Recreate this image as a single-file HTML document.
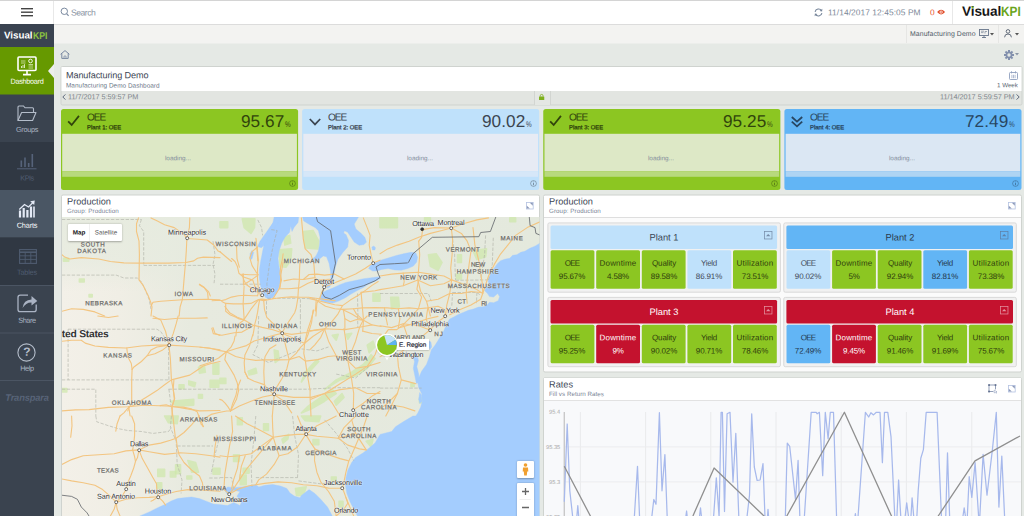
<!DOCTYPE html><html><head><meta charset="utf-8"><title>Visual KPI</title><style>
html,body{margin:0;padding:0;width:1024px;height:516px;overflow:hidden}
body{width:1024px;height:516px;overflow:hidden;position:relative;background:#e5e9e5;font-family:"Liberation Sans",sans-serif;}
div{box-sizing:border-box}
svg{position:absolute;overflow:visible}
</style></head><body><div style="position:absolute;left:0;top:0;width:1024px;height:516px;overflow:hidden">
<div style="position:absolute;left:0.00px;top:0.00px;width:1024.00px;height:24.00px;background:#fff;border-top:1px solid #d4d4d4;"></div>
<svg style="left:-1px;top:23px" width="1026" height="3"><rect x="1.00" y="1.00" width="1024.00" height="1.00" rx="0.00" fill="#dcdcdc"/></svg>
<svg style="left:53px;top:24px" width="972" height="21"><rect x="1.00" y="1.00" width="970.00" height="18.50" rx="0.00" fill="#f3f3f1"/></svg>
<svg style="left:52px;top:0px" width="3" height="25"><rect x="1.00" y="1.00" width="1.00" height="23.00" rx="0.00" fill="#e8e8e8"/></svg>
<svg style="left:20px;top:7px" width="14" height="4"><rect x="1.00" y="1.00" width="12.00" height="1.40" rx="0.00" fill="#444"/></svg>
<svg style="left:20px;top:10px" width="14" height="4"><rect x="1.00" y="1.50" width="12.00" height="1.40" rx="0.00" fill="#444"/></svg>
<svg style="left:20px;top:14px" width="14" height="4"><rect x="1.00" y="1.00" width="12.00" height="1.40" rx="0.00" fill="#444"/></svg>
<svg style="left:60px;top:7px" width="10" height="10" viewBox="0 0 10 10"><circle cx="4.3" cy="4.3" r="3.2" fill="none" stroke="#7b8aa0" stroke-width="1"/><path d="M6.6 6.6 L8.6 8.8" stroke="#7b8aa0" stroke-width="1.1"/></svg>
<div style="position:absolute;top:2px;height:20px;line-height:20px;font-size:8.6px;color:#8a94a3;white-space:nowrap;transform:translateY(0.60px) rotate(0.03deg);transform-origin:left center;left:71.00px;letter-spacing:-0.490px;">Search</div>
<svg style="left:814px;top:7.5px" width="9" height="9" viewBox="0 0 10 10"><path d="M1.2 4.2 A3.9 3.9 0 0 1 8.4 3" fill="none" stroke="#76859a" stroke-width="1.2"/><path d="M8.8 5.8 A3.9 3.9 0 0 1 1.6 7" fill="none" stroke="#76859a" stroke-width="1.2"/><path d="M9.3 0.8 L9 3.8 L6.2 3.2 Z M0.7 9.2 L1 6.2 L3.8 6.8 Z" fill="#76859a"/></svg>
<div style="position:absolute;top:2px;height:20px;line-height:20px;font-size:8.4px;color:#7b8797;white-space:nowrap;transform:translateY(0.30px) rotate(0.03deg);transform-origin:left center;left:828.00px;letter-spacing:0.067px;">11/14/2017 12:45:05 PM</div>
<div style="position:absolute;top:2px;height:20px;line-height:20px;font-size:8.4px;color:#e8532b;white-space:nowrap;transform:translateY(0.30px) rotate(0.03deg);transform-origin:left center;left:930.00px;">0</div>
<svg style="left:936.8px;top:9px" width="8.2" height="6.2" viewBox="0 0 9 7"><path d="M0 3.5 Q4.5 -1.8 9 3.5 Q4.5 8.8 0 3.5Z" fill="#e04a26"/><circle cx="4.5" cy="3.5" r="1.7" fill="#fff"/><circle cx="4.5" cy="3.5" r="0.9" fill="#e04a26"/></svg>
<svg style="left:951px;top:0px" width="3" height="25"><rect x="1.00" y="1.00" width="1.00" height="23.00" rx="0.00" fill="#e8e8e8"/></svg>
<div style="position:absolute;top:1px;height:20px;line-height:20px;font-size:13.6px;color:#161616;white-space:nowrap;transform:translateY(0.70px) rotate(0.03deg);transform-origin:left center;left:961.70px;font-weight:bold;letter-spacing:-0.104px;">Visual</div>
<div style="position:absolute;top:1px;height:20px;line-height:20px;font-size:13.6px;color:#6aa51c;white-space:nowrap;transform:translateY(0.70px) rotate(0.03deg) scaleX(0.870);transform-origin:left center;left:1001.20px;font-weight:bold;">KPI</div>
<svg style="left:971px;top:6px" width="4" height="3"><rect x="0.65" y="0.45" width="1.95" height="1.8" fill="#7ab51d"/></svg>
<svg style="left:905px;top:24px" width="3" height="20"><rect x="1.00" y="1.00" width="1.00" height="18.00" rx="0.00" fill="#e6e6e4"/></svg>
<svg style="left:997px;top:24px" width="3" height="20"><rect x="1.00" y="1.00" width="1.00" height="18.00" rx="0.00" fill="#e6e6e4"/></svg>
<div style="position:absolute;top:23px;height:20px;line-height:20px;font-size:6.9px;color:#4d5866;white-space:nowrap;transform:translateY(0.90px) rotate(0.03deg);transform-origin:left center;left:909.50px;letter-spacing:0.091px;">Manufacturing Demo</div>
<svg style="left:979px;top:29px" width="10" height="9" viewBox="0 0 10 9"><rect x="0.5" y="0.5" width="9" height="6" fill="none" stroke="#67758a" stroke-width="0.9"/><path d="M3 8.5H7M5 6.5V8.5" stroke="#67758a" stroke-width="0.9"/><path d="M2 2.2H5M2 3.6H4.5M6 4.5V2.5H8" stroke="#67758a" stroke-width="0.6" fill="none"/></svg>
<svg style="left:990px;top:33px" width="4" height="3" viewBox="0 0 4 3"><path d="M0 0H4L2 2.6Z" fill="#555"/></svg>
<svg style="left:1004px;top:29px" width="8" height="9" viewBox="0 0 8 9"><circle cx="4" cy="2.4" r="1.8" fill="none" stroke="#555f6e" stroke-width="0.9"/><path d="M0.6 8.3 Q0.6 5 4 5 Q7.4 5 7.4 8.3" fill="none" stroke="#555f6e" stroke-width="0.9"/></svg>
<svg style="left:1014.5px;top:33px" width="4" height="3" viewBox="0 0 4 3"><path d="M0 0H4L2 2.6Z" fill="#555"/></svg>
<svg style="left:60.3px;top:49.5px" width="10" height="9" viewBox="0 0 10 9"><path d="M0.6 4.3 L5 0.6 L9.4 4.3 M1.8 3.6 V8.4 H8.2 V3.6" fill="none" stroke="#6d7d9a" stroke-width="0.9"/><path d="M4 8.4V6H6V8.4" fill="none" stroke="#6d7d9a" stroke-width="0.6"/></svg>
<svg style="left:1003.5px;top:50px" width="10" height="10" viewBox="-5 -5 10 10"><g fill="#8290ad"><rect x="-1" y="-5" width="2" height="3" transform="rotate(0)"/><rect x="-1" y="-5" width="2" height="3" transform="rotate(45)"/><rect x="-1" y="-5" width="2" height="3" transform="rotate(90)"/><rect x="-1" y="-5" width="2" height="3" transform="rotate(135)"/><rect x="-1" y="-5" width="2" height="3" transform="rotate(180)"/><rect x="-1" y="-5" width="2" height="3" transform="rotate(225)"/><rect x="-1" y="-5" width="2" height="3" transform="rotate(270)"/><rect x="-1" y="-5" width="2" height="3" transform="rotate(315)"/></g><circle r="3.4" fill="#8290ad"/><circle r="1.7" fill="#e4e8e4"/></svg>
<svg style="left:1015px;top:53px" width="4" height="3" viewBox="0 0 4 3"><path d="M0 0H4L2 2.6Z" fill="#8a95a5"/></svg>
<svg style="left:-1px;top:23px" width="56" height="494"><rect x="1.00" y="1.00" width="54.00" height="492.00" rx="0.00" fill="#3a434f"/></svg>
<svg style="left:-1px;top:23px" width="56" height="25"><rect x="1.00" y="1.00" width="54.00" height="23.00" rx="0.00" fill="#3a4350"/></svg>
<div style="position:absolute;top:25px;height:20px;line-height:20px;font-size:9.8px;color:#fff;white-space:nowrap;transform:translateY(0.60px) rotate(0.03deg);transform-origin:left center;left:3.80px;font-weight:bold;letter-spacing:-0.019px;">Visual</div>
<div style="position:absolute;top:25px;height:20px;line-height:20px;font-size:9.8px;color:#8cc63f;white-space:nowrap;transform:translateY(0.60px) rotate(0.03deg) scaleX(0.885);transform-origin:left center;left:32.90px;font-weight:bold;">KPI</div>
<svg style="left:-1px;top:46px" width="56" height="50"><rect x="1.00" y="1.00" width="54.00" height="47.50" rx="0.00" fill="#669900"/></svg>
<svg style="left:48px;top:64px" width="6" height="14" viewBox="0 0 6 14"><path d="M6 0 L0 7 L6 14Z" fill="#eceeec"/></svg>
<svg style="left:-1px;top:141px" width="56" height="50"><rect x="1.00" y="1.00" width="54.00" height="48.00" rx="0.00" fill="#303843"/></svg>
<svg style="left:-1px;top:189px" width="56" height="50"><rect x="1.00" y="1.00" width="54.00" height="47.50" rx="0.00" fill="#4a5664"/></svg>
<svg style="left:-1px;top:236px" width="56" height="50"><rect x="1.00" y="1.50" width="54.00" height="47.50" rx="0.00" fill="#303843"/></svg>
<svg style="left:-1px;top:284px" width="56" height="3"><rect x="1.00" y="1.00" width="54.00" height="1.00" rx="0.00" fill="#4b5563"/></svg>
<svg style="left:-1px;top:331px" width="56" height="4"><rect x="1.00" y="1.50" width="54.00" height="1.00" rx="0.00" fill="#4b5563"/></svg>
<svg style="left:-1px;top:379px" width="56" height="3"><rect x="1.00" y="1.00" width="54.00" height="1.00" rx="0.00" fill="#4b5563"/></svg>
<svg style="left:17px;top:56px" width="20" height="20" viewBox="0 0 20 20"><rect x="1" y="1" width="18" height="13.5" rx="1" fill="none" stroke="#fff" stroke-width="1.6"/><path d="M10 14.5V18M6 18.6H14" stroke="#fff" stroke-width="1.6"/><path d="M4 5H8.5M4 7H8.5M11.5 10H16M11.5 12H16M11.5 8.5H16" stroke="#d7e6b0" stroke-width="0.8"/><circle cx="13.5" cy="5" r="1.8" fill="none" stroke="#fff" stroke-width="0.9"/><path d="M4.5 12V10M6 12V9M7.5 12V8.2" stroke="#e6f0cc" stroke-width="0.9"/></svg>
<div style="position:absolute;top:71px;height:20px;line-height:20px;font-size:7.3px;color:#fff;white-space:nowrap;transform:translateY(0.80px) rotate(0.03deg);transform-origin:center center;left:-123.16px;width:300px;text-align:center;letter-spacing:-0.314px;">Dashboard</div>
<svg style="left:17px;top:105px" width="20" height="17" viewBox="0 0 20 17"><path d="M1 15.5 V2 Q1 1 2 1 H6.5 L8 2.8 H15.5 Q16.5 2.8 16.5 3.8 V7.5" fill="none" stroke="#b4bdca" stroke-width="1.1"/><path d="M1 15.5 L4.6 7.5 H19 L15.6 15.5 Z" fill="none" stroke="#b4bdca" stroke-width="1.1" stroke-linejoin="round"/></svg>
<div style="position:absolute;top:119px;height:20px;line-height:20px;font-size:7.3px;color:#aab4c2;white-space:nowrap;transform:translateY(0.90px) rotate(0.03deg);transform-origin:center center;left:-123.14px;width:300px;text-align:center;letter-spacing:-0.288px;">Groups</div>
<svg style="left:17px;top:153px" width="20" height="17" viewBox="0 0 20 17"><path d="M0 15.8H19.5" stroke="#56637a" stroke-width="1"/><path d="M4.3 14V7.5M8 14V4.5M11.7 14V10M15.3 14V1" stroke="#56637a" stroke-width="1.6"/></svg>
<div style="position:absolute;top:168px;height:20px;line-height:20px;font-size:7.3px;color:#505d72;white-space:nowrap;transform:translateY(0.50px) rotate(0.03deg);transform-origin:center center;left:-123.24px;width:300px;text-align:center;letter-spacing:-0.472px;">KPIs</div>
<svg style="left:19px;top:200px" width="17" height="18" viewBox="0 0 17 18"><path d="M1 17.5V10.5M4.7 17.5V8M8.4 17.5V10M12 17.5V6.5" stroke="#e4eaf6" stroke-width="2.2"/><path d="M0.3 9.5 L5.5 4.5 L9.5 7 L14 2.5" fill="none" stroke="#e4eaf6" stroke-width="1.3"/><path d="M11.2 1.2 L15.8 0.4 L15.2 5 Z" fill="#e4eaf6"/><path d="M15 6.5V17.5" stroke="#e4eaf6" stroke-width="1.6"/></svg>
<div style="position:absolute;top:215px;height:20px;line-height:20px;font-size:7.3px;color:#fff;white-space:nowrap;transform:translateY(0.70px) rotate(0.03deg);transform-origin:center center;left:-123.09px;width:300px;text-align:center;letter-spacing:-0.180px;">Charts</div>
<svg style="left:18.5px;top:249px" width="18" height="15" viewBox="0 0 18 15"><rect x="0.6" y="0.6" width="16.8" height="13.8" fill="none" stroke="#4f5c70" stroke-width="1.1"/><path d="M0.6 3.2H17.4" stroke="#4f5c70" stroke-width="1.6"/><path d="M0.6 6.8H17.4M0.6 10.4H17.4M6.2 3V14.4M11.8 3V14.4" stroke="#4f5c70" stroke-width="0.9"/></svg>
<div style="position:absolute;top:262px;height:20px;line-height:20px;font-size:7.3px;color:#4f5c70;white-space:nowrap;transform:translateY(0.70px) rotate(0.03deg);transform-origin:center center;left:-123.11px;width:300px;text-align:center;letter-spacing:-0.220px;">Tables</div>
<svg style="left:17px;top:294px" width="21" height="19" viewBox="0 0 21 19"><path d="M11 1.2 H3.2 Q1 1.2 1 3.4 V15.4 Q1 17.6 3.2 17.6 H17 Q19.2 17.6 19.2 15.4 V10.5" fill="none" stroke="#aab3c3" stroke-width="1.3"/><path d="M5.5 14 Q6.5 6 14.5 5.6 V2 L20.3 7 L14.5 11.6 V8.4 Q9 8.2 5.5 14Z" fill="#aab3c3"/></svg>
<div style="position:absolute;top:310px;height:20px;line-height:20px;font-size:7.3px;color:#aab4c2;white-space:nowrap;transform:translateY(0.70px) rotate(0.03deg);transform-origin:center center;left:-123.19px;width:300px;text-align:center;letter-spacing:-0.370px;">Share</div>
<svg style="left:17px;top:342.5px" width="19" height="19" viewBox="0 0 19 19"><circle cx="9.5" cy="9.5" r="8.6" fill="none" stroke="#b4bdca" stroke-width="1.1"/></svg>
<div style="position:absolute;top:341px;height:20px;line-height:20px;font-size:12px;color:#b4bdca;white-space:nowrap;transform:translateY(0.80px) rotate(0.03deg);transform-origin:center center;left:-123.50px;width:300px;text-align:center;font-weight:bold;">?</div>
<div style="position:absolute;top:358px;height:20px;line-height:20px;font-size:7.3px;color:#aab4c2;white-space:nowrap;transform:translateY(0.70px) rotate(0.03deg);transform-origin:center center;left:-123.17px;width:300px;text-align:center;letter-spacing:-0.338px;">Help</div>
<div style="position:absolute;top:387px;height:20px;line-height:20px;font-size:9.3px;color:#586478;white-space:nowrap;transform:translateY(0.80px) rotate(0.03deg);transform-origin:center center;left:-123.50px;width:300px;text-align:center;font-weight:bold;font-style:italic;letter-spacing:-0.15px;">Transpara</div>
<svg style="left:59px;top:65px" width="965" height="42"><rect x="2.00" y="1.50" width="961.00" height="38.50" rx="1.50" fill="#e2e5e1" stroke="#cfd3cf" stroke-width="1.0"/></svg>
<svg style="left:60px;top:66px" width="963" height="26"><rect x="1.50" y="1.00" width="960.00" height="24.00" rx="0.00" fill="#fff"/></svg>
<div style="position:absolute;top:65px;height:20px;line-height:20px;font-size:9.1px;color:#3c4654;white-space:nowrap;transform:translateY(0.20px) rotate(0.03deg);transform-origin:left center;left:66.00px;letter-spacing:-0.116px;">Manufacturing Demo</div>
<div style="position:absolute;top:75px;height:20px;line-height:20px;font-size:6.4px;color:#6b7687;white-space:nowrap;transform:translateY(0.60px) rotate(0.03deg);transform-origin:left center;left:66.00px;letter-spacing:0.045px;">Manufacturing Demo Dashboard</div>
<div style="position:absolute;top:87px;height:20px;line-height:20px;font-size:7.3px;color:#7f858c;white-space:nowrap;transform:translateY(0.20px) rotate(0.03deg);transform-origin:left center;left:68.40px;letter-spacing:-0.047px;">11/7/2017 5:59:57 PM</div>
<svg style="left:62px;top:94.3px" width="4" height="6" viewBox="0 0 4 6"><path d="M3.4 0.4 L0.8 3 L3.4 5.6" fill="none" stroke="#4e5a6e" stroke-width="0.9"/></svg>
<div style="position:absolute;top:87px;height:20px;line-height:20px;font-size:7.3px;color:#7f858c;white-space:nowrap;transform:translateY(0.20px) rotate(0.03deg);transform-origin:right center;right:9.43px;letter-spacing:-0.033px;">11/14/2017 5:59:57 PM</div>
<svg style="left:1016.4px;top:94.3px" width="4" height="6" viewBox="0 0 4 6"><path d="M0.6 0.4 L3.2 3 L0.6 5.6" fill="none" stroke="#4e5a6e" stroke-width="0.9"/></svg>
<div style="position:absolute;top:75px;height:20px;line-height:20px;font-size:6.2px;color:#555f6e;white-space:nowrap;transform:translateY(0.20px) rotate(0.03deg);transform-origin:right center;right:6.50px;">1 Week</div>
<svg style="left:1009px;top:71px" width="9" height="9" viewBox="0 0 9 9"><rect x="0.5" y="1.5" width="8" height="7" rx="0.8" fill="none" stroke="#8f9fbe" stroke-width="0.9"/><path d="M2.5 0.3V2.4M6.5 0.3V2.4" stroke="#8f9fbe" stroke-width="0.9"/><path d="M2.9 3.8V7.2M4.5 3.8V7.2M6.1 3.8V7.2" stroke="#8f9fbe" stroke-width="0.7"/></svg>
<div style="position:absolute;left:533.50px;top:91.00px;width:17.00px;height:14.00px;background:#e4e7e3;border-left:1px solid #d2d5d1;border-right:1px solid #d2d5d1;"></div>
<svg style="left:538.8px;top:94px" width="5.3" height="6.1" viewBox="0 0 6 7"><rect x="0" y="2.8" width="6" height="4.2" rx="0.5" fill="#7db01c"/><path d="M1.4 3V2 Q1.4 0.5 3 0.5 Q4.6 0.5 4.6 2V3" fill="none" stroke="#7db01c" stroke-width="0.9"/></svg>
<svg style="left:60px;top:108px" width="240" height="83"><rect x="1.00" y="1.00" width="237.10" height="81.00" rx="2.50" fill="#8cc622"/></svg>
<svg style="left:61px;top:132px" width="237" height="41"><rect x="1.20" y="1.80" width="234.70" height="37.40" rx="0.00" fill="#dde8c6"/></svg>
<svg style="left:61px;top:170px" width="237" height="8"><rect x="1.20" y="1.20" width="234.70" height="5.60" rx="0.00" fill="#b8d97d"/></svg>
<div style="position:absolute;top:148px;height:20px;line-height:20px;font-size:6.4px;color:#828c9b;white-space:nowrap;transform:translateY(0.30px) rotate(0.03deg);transform-origin:center center;left:28.41px;width:300px;text-align:center;letter-spacing:0.025px;">loading...</div>
<svg style="left:67px;top:115.3px" width="13" height="11.5" viewBox="0 0 13 12"><path d="M0.9 6.6 L4.6 10.4 L12.2 0.9" fill="none" stroke="#31440c" stroke-width="1.8"/></svg>
<div style="position:absolute;top:107px;height:20px;line-height:20px;font-size:10.1px;color:#31440c;white-space:nowrap;transform:translateY(0.60px) rotate(0.03deg);transform-origin:left center;left:86.50px;letter-spacing:-1.015px;">OEE</div>
<div style="position:absolute;top:117px;height:20px;line-height:20px;font-size:5.9px;color:#31440c;white-space:nowrap;transform:translateY(0.20px) rotate(0.03deg);transform-origin:left center;left:86.50px;-webkit-text-stroke:0.3px #31440c;letter-spacing:0.018px;">Plant 1: OEE</div>
<div style="position:absolute;top:110px;height:20px;line-height:20px;font-size:17.2px;color:#31440c;white-space:nowrap;transform:translateY(0.90px) rotate(0.03deg);transform-origin:right center;right:739.54px;letter-spacing:0.064px;">95.67</div>
<div style="position:absolute;top:114px;height:20px;line-height:20px;font-size:8.3px;color:#31440c;white-space:nowrap;transform:translateY(0.30px) rotate(0.03deg) scaleX(0.770);transform-origin:left center;left:285.10px;">%</div>
<svg style="left:289px;top:180px" width="7" height="7" viewBox="0 0 7 7"><circle cx="3.5" cy="3.5" r="2.9" fill="none" stroke="#31440c" stroke-opacity="0.65" stroke-width="0.6"/><path d="M3.5 3V5.2M3.5 1.7V2.3" stroke="#31440c" stroke-opacity="0.75" stroke-width="0.7"/></svg>
<svg style="left:301px;top:108px" width="240" height="83"><rect x="1.13" y="1.00" width="237.10" height="81.00" rx="2.50" fill="#bfe1fb"/></svg>
<svg style="left:302px;top:132px" width="238" height="41"><rect x="1.33" y="1.80" width="234.70" height="37.40" rx="0.00" fill="#e7ebf4"/></svg>
<svg style="left:302px;top:170px" width="238" height="8"><rect x="1.33" y="1.20" width="234.70" height="5.60" rx="0.00" fill="#d6e7f8"/></svg>
<div style="position:absolute;top:148px;height:20px;line-height:20px;font-size:6.4px;color:#828c9b;white-space:nowrap;transform:translateY(0.30px) rotate(0.03deg);transform-origin:center center;left:269.54px;width:300px;text-align:center;letter-spacing:0.025px;">loading...</div>
<svg style="left:308.63px;top:117.5px" width="12" height="8" viewBox="0 0 12 8"><path d="M0.8 1 L6 6.4 L11.2 1" fill="none" stroke="#3b4550" stroke-width="1.7"/></svg>
<div style="position:absolute;top:107px;height:20px;line-height:20px;font-size:10.1px;color:#3b4550;white-space:nowrap;transform:translateY(0.60px) rotate(0.03deg);transform-origin:left center;left:327.63px;letter-spacing:-1.015px;">OEE</div>
<div style="position:absolute;top:117px;height:20px;line-height:20px;font-size:5.9px;color:#3b4550;white-space:nowrap;transform:translateY(0.20px) rotate(0.03deg);transform-origin:left center;left:327.63px;-webkit-text-stroke:0.3px #3b4550;letter-spacing:0.018px;">Plant 2: OEE</div>
<div style="position:absolute;top:110px;height:20px;line-height:20px;font-size:17.2px;color:#3b4550;white-space:nowrap;transform:translateY(0.90px) rotate(0.03deg);transform-origin:right center;right:498.41px;letter-spacing:0.064px;">90.02</div>
<div style="position:absolute;top:114px;height:20px;line-height:20px;font-size:8.3px;color:#3b4550;white-space:nowrap;transform:translateY(0.30px) rotate(0.03deg) scaleX(0.770);transform-origin:left center;left:526.23px;">%</div>
<svg style="left:530.13px;top:180px" width="7" height="7" viewBox="0 0 7 7"><circle cx="3.5" cy="3.5" r="2.9" fill="none" stroke="#3b4550" stroke-opacity="0.65" stroke-width="0.6"/><path d="M3.5 3V5.2M3.5 1.7V2.3" stroke="#3b4550" stroke-opacity="0.75" stroke-width="0.7"/></svg>
<svg style="left:542px;top:108px" width="240" height="83"><rect x="1.26" y="1.00" width="237.10" height="81.00" rx="2.50" fill="#8cc622"/></svg>
<svg style="left:543px;top:132px" width="238" height="41"><rect x="1.46" y="1.80" width="234.70" height="37.40" rx="0.00" fill="#dde8c6"/></svg>
<svg style="left:543px;top:170px" width="238" height="8"><rect x="1.46" y="1.20" width="234.70" height="5.60" rx="0.00" fill="#b8d97d"/></svg>
<div style="position:absolute;top:148px;height:20px;line-height:20px;font-size:6.4px;color:#828c9b;white-space:nowrap;transform:translateY(0.30px) rotate(0.03deg);transform-origin:center center;left:510.67px;width:300px;text-align:center;letter-spacing:0.025px;">loading...</div>
<svg style="left:549.26px;top:115.3px" width="13" height="11.5" viewBox="0 0 13 12"><path d="M0.9 6.6 L4.6 10.4 L12.2 0.9" fill="none" stroke="#31440c" stroke-width="1.8"/></svg>
<div style="position:absolute;top:107px;height:20px;line-height:20px;font-size:10.1px;color:#31440c;white-space:nowrap;transform:translateY(0.60px) rotate(0.03deg);transform-origin:left center;left:568.76px;letter-spacing:-1.015px;">OEE</div>
<div style="position:absolute;top:117px;height:20px;line-height:20px;font-size:5.9px;color:#31440c;white-space:nowrap;transform:translateY(0.20px) rotate(0.03deg);transform-origin:left center;left:568.76px;-webkit-text-stroke:0.3px #31440c;letter-spacing:0.018px;">Plant 3: OEE</div>
<div style="position:absolute;top:110px;height:20px;line-height:20px;font-size:17.2px;color:#31440c;white-space:nowrap;transform:translateY(0.90px) rotate(0.03deg);transform-origin:right center;right:257.28px;letter-spacing:0.064px;">95.25</div>
<div style="position:absolute;top:114px;height:20px;line-height:20px;font-size:8.3px;color:#31440c;white-space:nowrap;transform:translateY(0.30px) rotate(0.03deg) scaleX(0.770);transform-origin:left center;left:767.36px;">%</div>
<svg style="left:771.26px;top:180px" width="7" height="7" viewBox="0 0 7 7"><circle cx="3.5" cy="3.5" r="2.9" fill="none" stroke="#31440c" stroke-opacity="0.65" stroke-width="0.6"/><path d="M3.5 3V5.2M3.5 1.7V2.3" stroke="#31440c" stroke-opacity="0.75" stroke-width="0.7"/></svg>
<svg style="left:783px;top:108px" width="240" height="83"><rect x="1.40" y="1.00" width="237.10" height="81.00" rx="2.50" fill="#62b5f5"/></svg>
<svg style="left:784px;top:132px" width="238" height="41"><rect x="1.60" y="1.80" width="234.70" height="37.40" rx="0.00" fill="#dbe7f3"/></svg>
<svg style="left:784px;top:170px" width="238" height="8"><rect x="1.60" y="1.20" width="234.70" height="5.60" rx="0.00" fill="#aed4f3"/></svg>
<div style="position:absolute;top:148px;height:20px;line-height:20px;font-size:6.4px;color:#828c9b;white-space:nowrap;transform:translateY(0.30px) rotate(0.03deg);transform-origin:center center;left:751.81px;width:300px;text-align:center;letter-spacing:0.025px;">loading...</div>
<svg style="left:790.9px;top:115.5px" width="12" height="12" viewBox="0 0 12 12"><path d="M0.8 1 L6 5.6 L11.2 1 M0.8 5.6 L6 10.4 L11.2 5.6" fill="none" stroke="#284661" stroke-width="1.8"/></svg>
<div style="position:absolute;top:107px;height:20px;line-height:20px;font-size:10.1px;color:#284661;white-space:nowrap;transform:translateY(0.60px) rotate(0.03deg);transform-origin:left center;left:809.90px;letter-spacing:-1.015px;">OEE</div>
<div style="position:absolute;top:117px;height:20px;line-height:20px;font-size:5.9px;color:#284661;white-space:nowrap;transform:translateY(0.20px) rotate(0.03deg);transform-origin:left center;left:809.90px;-webkit-text-stroke:0.3px #284661;letter-spacing:0.018px;">Plant 4: OEE</div>
<div style="position:absolute;top:110px;height:20px;line-height:20px;font-size:17.2px;color:#284661;white-space:nowrap;transform:translateY(0.90px) rotate(0.03deg);transform-origin:right center;right:16.14px;letter-spacing:0.064px;">72.49</div>
<div style="position:absolute;top:114px;height:20px;line-height:20px;font-size:8.3px;color:#284661;white-space:nowrap;transform:translateY(0.30px) rotate(0.03deg) scaleX(0.770);transform-origin:left center;left:1008.50px;">%</div>
<svg style="left:1012.4px;top:180px" width="7" height="7" viewBox="0 0 7 7"><circle cx="3.5" cy="3.5" r="2.9" fill="none" stroke="#284661" stroke-opacity="0.65" stroke-width="0.6"/><path d="M3.5 3V5.2M3.5 1.7V2.3" stroke="#284661" stroke-opacity="0.75" stroke-width="0.7"/></svg>
<svg style="left:60px;top:193px" width="481" height="333"><rect x="1.50" y="2.00" width="478.00" height="329.00" rx="1.50" fill="#fff" stroke="#cfd3cf" stroke-width="1.0"/></svg>
<div style="position:absolute;top:191px;height:20px;line-height:20px;font-size:9.2px;color:#3c4654;white-space:nowrap;transform:translateY(0.60px) rotate(0.03deg);transform-origin:left center;left:66.50px;">Production</div>
<div style="position:absolute;top:200px;height:20px;line-height:20px;font-size:6.2px;color:#7a8596;white-space:nowrap;transform:translateY(0.90px) rotate(0.03deg);transform-origin:left center;left:66.50px;letter-spacing:0.099px;">Group: Production</div>
<svg style="left:62px;top:217px" width="477.5" height="299" viewBox="62 217 477.5 299"><defs><linearGradient id="lg" x1="0" x2="1" y1="0" y2="0"><stop offset="0" stop-color="#f3f0e8"/><stop offset="0.12" stop-color="#f0eee5"/><stop offset="0.27" stop-color="#e7eadf"/><stop offset="1" stop-color="#e4e9dd"/></linearGradient><clipPath id="mc"><rect x="62" y="217" width="477.5" height="299"/></clipPath></defs><g clip-path="url(#mc)"><rect x="62" y="217" width="478" height="299" fill="url(#lg)"/><defs><linearGradient id="lg2" x1="0" x2="0" y1="0" y2="1"><stop offset="0" stop-color="#e6ebdf" stop-opacity="0.9"/><stop offset="0.6" stop-color="#e6ebdf" stop-opacity="0.7"/><stop offset="1" stop-color="#e6ebdf" stop-opacity="0"/></linearGradient></defs><rect x="62" y="217" width="210" height="75" fill="url(#lg2)"/><path d="M63.5 258.2 L68.7 258.2 L68.7 261.3 L63.5 261.3Z" fill="#cde8a8" stroke="#cde8a8" stroke-width="1.6" stroke-linejoin="round" opacity="0.68"/><path d="M79.4 279.0 L84.2 279.0 L84.2 281.9 L79.4 281.9Z" fill="#cde8a8" stroke="#cde8a8" stroke-width="1.6" stroke-linejoin="round" opacity="0.68"/><path d="M89.1 294.5 L92.2 294.5 L92.2 297.0 L89.1 297.0Z" fill="#cde8a8" stroke="#cde8a8" stroke-width="1.6" stroke-linejoin="round" opacity="0.68"/><path d="M242.3 218.9 L254.9 218.9 L254.5 227.6 L251.0 233.4 L244.2 227.6Z" fill="#cde8a8" stroke="#cde8a8" stroke-width="1.6" stroke-linejoin="round" opacity="0.68"/><path d="M220.0 221.8 L227.7 221.8 L227.7 227.6 L220.0 227.6Z" fill="#cde8a8" stroke="#cde8a8" stroke-width="1.6" stroke-linejoin="round" opacity="0.68"/><path d="M279.1 249.9 L291.7 248.9 L290.7 260.6 L285.9 267.3 L280.0 266.4Z" fill="#cde8a8" stroke="#cde8a8" stroke-width="1.6" stroke-linejoin="round" opacity="0.68"/><path d="M303.3 231.5 L313.0 230.5 L318.8 241.2 L317.8 248.9 L305.2 248.0Z" fill="#cde8a8" stroke="#cde8a8" stroke-width="1.6" stroke-linejoin="round" opacity="0.68"/><path d="M373.0 293.5 L380.0 293.5 L380.0 301.2 L373.0 301.2Z" fill="#cde8a8" stroke="#cde8a8" stroke-width="1.6" stroke-linejoin="round" opacity="0.68"/><path d="M283.9 237.3 L289.7 235.4 L290.7 243.1 L284.9 245.1Z" fill="#cde8a8" stroke="#cde8a8" stroke-width="1.6" stroke-linejoin="round" opacity="0.68"/><path d="M380.0 217.9 L397.4 217.9 L397.4 227.6 L380.0 227.6Z" fill="#cde8a8" stroke="#cde8a8" stroke-width="1.6" stroke-linejoin="round" opacity="0.68"/><path d="M428.4 254.7 L436.2 253.8 L442.0 262.5 L438.1 270.2 L430.4 266.4Z" fill="#cde8a8" stroke="#cde8a8" stroke-width="1.6" stroke-linejoin="round" opacity="0.68"/><path d="M473.0 250.9 L486.5 248.9 L485.6 256.7 L476.9 259.6Z" fill="#cde8a8" stroke="#cde8a8" stroke-width="1.6" stroke-linejoin="round" opacity="0.68"/><path d="M457.5 254.7 L461.4 254.7 L461.4 262.5 L457.5 262.5Z" fill="#cde8a8" stroke="#cde8a8" stroke-width="1.6" stroke-linejoin="round" opacity="0.68"/><path d="M456.5 274.1 L461.4 274.1 L461.4 279.0 L456.5 279.0Z" fill="#cde8a8" stroke="#cde8a8" stroke-width="1.6" stroke-linejoin="round" opacity="0.68"/><path d="M390.7 297.4 L398.4 297.4 L399.4 307.0 L391.6 309.0Z" fill="#cde8a8" stroke="#cde8a8" stroke-width="1.6" stroke-linejoin="round" opacity="0.68"/><path d="M509.8 217.9 L515.6 217.9 L515.6 221.8 L509.8 221.8Z" fill="#cde8a8" stroke="#cde8a8" stroke-width="1.6" stroke-linejoin="round" opacity="0.68"/><path d="M424.6 217.9 L430.4 217.9 L430.4 221.8 L424.6 221.8Z" fill="#cde8a8" stroke="#cde8a8" stroke-width="1.6" stroke-linejoin="round" opacity="0.68"/><path d="M198.5 367.3 L204.3 365.4 L205.3 372.2 L199.5 373.1Z" fill="#cde8a8" stroke="#cde8a8" stroke-width="1.6" stroke-linejoin="round" opacity="0.68"/><path d="M213.0 363.5 L218.8 363.5 L218.8 374.1 L213.0 374.1Z" fill="#cde8a8" stroke="#cde8a8" stroke-width="1.6" stroke-linejoin="round" opacity="0.68"/><path d="M188.8 380.9 L195.6 382.8 L194.6 386.7 L188.8 384.8Z" fill="#cde8a8" stroke="#cde8a8" stroke-width="1.6" stroke-linejoin="round" opacity="0.68"/><path d="M210.1 380.3 L218.8 380.3 L218.8 387.3 L210.1 387.3Z" fill="#cde8a8" stroke="#cde8a8" stroke-width="1.6" stroke-linejoin="round" opacity="0.68"/><path d="M170.4 401.2 L193.7 399.3 L193.7 405.1 L176.2 406.1Z" fill="#cde8a8" stroke="#cde8a8" stroke-width="1.6" stroke-linejoin="round" opacity="0.68"/><path d="M179.1 384.8 L184.0 384.8 L184.0 388.6 L179.1 388.6Z" fill="#cde8a8" stroke="#cde8a8" stroke-width="1.6" stroke-linejoin="round" opacity="0.68"/><path d="M61.9 388.6 L66.8 388.6 L66.8 391.9 L61.9 391.9Z" fill="#cde8a8" stroke="#cde8a8" stroke-width="1.6" stroke-linejoin="round" opacity="0.68"/><path d="M198.5 394.5 L202.4 394.5 L202.4 398.3 L198.5 398.3Z" fill="#cde8a8" stroke="#cde8a8" stroke-width="1.6" stroke-linejoin="round" opacity="0.68"/><path d="M301.4 412.9 L311.0 409.0 L324.6 401.2 L336.2 393.5 L332.3 389.6 L320.7 397.4 L307.2 407.0Z" fill="#cde8a8" stroke="#cde8a8" stroke-width="1.6" stroke-linejoin="round" opacity="0.68"/><path d="M324.6 389.6 L340.1 379.9 L355.6 376.0 L367.2 368.3 L375.0 358.6 L371.1 354.7 L363.3 364.4 L351.7 372.2 L336.2 379.9Z" fill="#cde8a8" stroke="#cde8a8" stroke-width="1.6" stroke-linejoin="round" opacity="0.68"/><path d="M301.4 381.9 L307.2 374.1 L318.8 361.5 L316.9 359.6 L305.2 372.2Z" fill="#cde8a8" stroke="#cde8a8" stroke-width="1.6" stroke-linejoin="round" opacity="0.68"/><path d="M274.2 349.9 L278.1 350.9 L279.1 359.6 L275.2 362.5Z" fill="#cde8a8" stroke="#cde8a8" stroke-width="1.6" stroke-linejoin="round" opacity="0.68"/><path d="M332.3 335.4 L338.2 334.4 L336.2 340.2Z" fill="#cde8a8" stroke="#cde8a8" stroke-width="1.6" stroke-linejoin="round" opacity="0.68"/><path d="M345.9 334.4 L351.7 333.4 L347.8 339.2Z" fill="#cde8a8" stroke="#cde8a8" stroke-width="1.6" stroke-linejoin="round" opacity="0.68"/><path d="M367.2 345.1 L373.0 341.2 L375.0 347.0 L369.2 352.8Z" fill="#cde8a8" stroke="#cde8a8" stroke-width="1.6" stroke-linejoin="round" opacity="0.68"/><path d="M248.1 371.2 L255.8 368.3 L256.8 373.1 L249.1 375.1Z" fill="#cde8a8" stroke="#cde8a8" stroke-width="1.6" stroke-linejoin="round" opacity="0.68"/><path d="M220.0 378.4 L225.8 378.4 L225.8 383.4 L220.0 383.4Z" fill="#cde8a8" stroke="#cde8a8" stroke-width="1.6" stroke-linejoin="round" opacity="0.68"/><path d="M334.3 401.2 L342.0 393.5 L344.0 397.4 L336.2 405.1Z" fill="#cde8a8" stroke="#cde8a8" stroke-width="1.6" stroke-linejoin="round" opacity="0.68"/><path d="M411.0 383.4 L414.1 383.4 L414.1 386.5 L411.0 386.5Z" fill="#cde8a8" stroke="#cde8a8" stroke-width="1.6" stroke-linejoin="round" opacity="0.68"/><path d="M419.5 397.7 L422.6 397.7 L422.6 402.8 L419.5 402.8Z" fill="#cde8a8" stroke="#cde8a8" stroke-width="1.6" stroke-linejoin="round" opacity="0.68"/><path d="M164.6 416.0 L178.2 416.0 L177.2 423.7 L168.5 422.8Z" fill="#cde8a8" stroke="#cde8a8" stroke-width="1.6" stroke-linejoin="round" opacity="0.68"/><path d="M157.8 469.3 L164.6 469.3 L164.6 476.4 L157.8 476.4Z" fill="#cde8a8" stroke="#cde8a8" stroke-width="1.6" stroke-linejoin="round" opacity="0.68"/><path d="M170.4 471.6 L175.8 471.6 L175.8 477.0 L170.4 477.0Z" fill="#cde8a8" stroke="#cde8a8" stroke-width="1.6" stroke-linejoin="round" opacity="0.68"/><path d="M175.6 464.8 L180.5 464.8 L180.5 473.7 L175.6 473.7Z" fill="#cde8a8" stroke="#cde8a8" stroke-width="1.6" stroke-linejoin="round" opacity="0.68"/><path d="M187.8 460.6 L195.6 462.5 L198.5 472.2 L191.7 472.2Z" fill="#cde8a8" stroke="#cde8a8" stroke-width="1.6" stroke-linejoin="round" opacity="0.68"/><path d="M156.9 482.8 L161.7 482.8 L161.7 488.6 L156.9 488.6Z" fill="#cde8a8" stroke="#cde8a8" stroke-width="1.6" stroke-linejoin="round" opacity="0.68"/><path d="M213.0 468.3 L220.0 468.3 L220.0 474.1 L213.0 474.1Z" fill="#cde8a8" stroke="#cde8a8" stroke-width="1.6" stroke-linejoin="round" opacity="0.68"/><path d="M186.9 476.0 L191.7 476.0 L191.7 479.0 L186.9 479.0Z" fill="#cde8a8" stroke="#cde8a8" stroke-width="1.6" stroke-linejoin="round" opacity="0.68"/><path d="M301.4 416.0 L320.7 416.0 L318.8 421.8 L305.2 420.8Z" fill="#cde8a8" stroke="#cde8a8" stroke-width="1.6" stroke-linejoin="round" opacity="0.68"/><path d="M237.4 417.9 L242.3 417.9 L242.3 424.7 L237.4 424.7Z" fill="#cde8a8" stroke="#cde8a8" stroke-width="1.6" stroke-linejoin="round" opacity="0.68"/><path d="M263.6 423.7 L268.4 423.7 L268.4 430.5 L263.6 430.5Z" fill="#cde8a8" stroke="#cde8a8" stroke-width="1.6" stroke-linejoin="round" opacity="0.68"/><path d="M282.0 439.2 L288.8 434.4 L287.8 439.2 L283.0 443.1Z" fill="#cde8a8" stroke="#cde8a8" stroke-width="1.6" stroke-linejoin="round" opacity="0.68"/><path d="M233.6 454.7 L239.4 454.7 L239.4 461.5 L233.6 461.5Z" fill="#cde8a8" stroke="#cde8a8" stroke-width="1.6" stroke-linejoin="round" opacity="0.68"/><path d="M243.2 468.3 L249.1 468.3 L249.1 473.1 L243.2 473.1Z" fill="#cde8a8" stroke="#cde8a8" stroke-width="1.6" stroke-linejoin="round" opacity="0.68"/><path d="M240.3 475.1 L246.2 475.1 L246.2 484.8 L240.3 484.8Z" fill="#cde8a8" stroke="#cde8a8" stroke-width="1.6" stroke-linejoin="round" opacity="0.68"/><path d="M295.5 488.6 L306.2 486.7 L303.3 495.4 L296.5 495.4Z" fill="#cde8a8" stroke="#cde8a8" stroke-width="1.6" stroke-linejoin="round" opacity="0.68"/><path d="M313.0 439.6 L318.8 439.6 L318.8 444.7 L313.0 444.7Z" fill="#cde8a8" stroke="#cde8a8" stroke-width="1.6" stroke-linejoin="round" opacity="0.68"/><path d="M366.2 441.2 L373.0 439.2 L371.1 447.0Z" fill="#cde8a8" stroke="#cde8a8" stroke-width="1.6" stroke-linejoin="round" opacity="0.68"/><path d="M331.4 477.0 L336.2 477.0 L336.2 480.9 L331.4 480.9Z" fill="#cde8a8" stroke="#cde8a8" stroke-width="1.6" stroke-linejoin="round" opacity="0.68"/><path d="M339.1 501.2 L343.0 501.2 L343.0 507.0 L339.1 507.0Z" fill="#cde8a8" stroke="#cde8a8" stroke-width="1.6" stroke-linejoin="round" opacity="0.68"/><path d="M551.0 236.2 L539.9 243.2 L534.9 246.2 L529.9 248.3 L524.8 251.3 L520.8 252.3 L516.8 254.7 L512.7 255.3 L509.7 258.3 L504.7 259.3 L500.6 260.7 L497.6 263.4 L494.6 267.4 L491.6 271.4 L489.5 276.5 L488.1 281.5 L489.5 284.5 L486.5 287.6 L484.5 290.6 L487.5 293.6 L489.5 296.6 L493.6 297.0 L497.6 293.6 L499.6 296.6 L498.2 300.7 L493.6 302.7 L489.5 302.3 L487.5 304.7 L483.5 306.7 L478.5 307.1 L473.4 309.1 L468.4 310.3 L463.3 312.4 L458.3 314.4 L454.3 316.8 L450.2 318.8 L449.7 318.9 L446.8 323.7 L443.9 330.5 L440.0 337.3 L435.2 345.1 L431.3 349.9 L429.4 356.7 L426.5 364.4 L421.6 371.2 L418.7 378.0 L417.8 382.8 L418.7 387.7 L421.6 393.5 L422.2 401.2 L420.7 407.0 L417.8 412.9 L415.8 416.0 L412.9 416.0 L403.2 421.8 L395.5 426.7 L391.6 431.5 L380.0 434.4 L375.0 443.1 L369.2 448.0 L363.3 452.8 L355.6 457.6 L351.7 462.5 L347.8 470.2 L345.9 478.0 L345.5 485.7 L346.9 493.5 L349.8 501.2 L353.7 509.0 L357.5 516.0 L358.5 518.7 L545.0 525.0 L545.0 216.0Z" fill="#a4cdfe" stroke="#a4cdfe" stroke-width="0.4" stroke-linejoin="round"/><path d="M414.5 351.8 L417.2 354.7 L418.4 360.6 L416.8 366.4 L418.7 374.1 L419.1 381.9 L416.4 383.4 L414.9 376.0 L413.3 368.3 L414.5 361.5 L412.9 355.7Z" fill="#a4cdfe" stroke="#a4cdfe" stroke-width="0.4" stroke-linejoin="round"/><path d="M428.4 340.8 L430.9 342.0 L431.7 347.0 L430.0 349.5 L428.4 346.0Z" fill="#a4cdfe" stroke="#a4cdfe" stroke-width="0.4" stroke-linejoin="round"/><path d="M419.7 392.5 L421.5 395.4 L421.8 401.2 L419.9 403.6 L418.7 399.3Z" fill="#a4cdfe" stroke="#a4cdfe" stroke-width="0.4" stroke-linejoin="round"/><path d="M333.3 518.7 L332.3 516.0 L327.5 507.0 L320.7 499.3 L314.9 493.5 L309.1 489.6 L301.4 495.4 L300.0 497.8 L294.7 496.2 L290.0 493.1 L286.9 488.4 L280.6 486.1 L272.8 484.5 L265.0 485.3 L258.8 486.9 L255.6 484.5 L249.4 486.1 L241.6 486.9 L233.8 487.7 L227.5 486.9 L224.8 490.3 L226.7 493.4 L231.4 492.8 L233.8 490.3 L240.0 491.6 L236.9 496.2 L241.6 501.7 L240.0 505.6 L233.8 502.5 L227.5 505.6 L221.2 504.8 L213.4 504.1 L205.6 500.9 L199.4 498.6 L191.6 497.0 L183.8 497.8 L177.5 498.6 L171.2 500.9 L165.8 504.1 L158.8 507.2 L149.4 511.9 L140.0 515.9 L135.0 520.0Z" fill="#a4cdfe" stroke="#a4cdfe" stroke-width="0.4" stroke-linejoin="round"/><path d="M274.4 216.0 L298.9 216.0 L298.0 222.5 L294.0 227.4 L292.0 231.5 L290.7 226.1 L289.6 232.3 L285.0 237.2 L281.8 242.9 L279.3 250.2 L278.0 258.3 L279.0 266.5 L280.6 273.0 L280.9 279.5 L279.3 286.0 L276.9 292.5 L272.8 297.4 L268.7 299.1 L265.5 297.4 L263.0 292.5 L260.6 286.0 L259.4 277.9 L259.4 269.7 L260.6 261.6 L262.2 253.5 L263.8 245.3 L265.5 238.8 L267.9 232.3 L270.4 227.4 L272.8 223.3Z" fill="#a4cdfe" stroke="#a4cdfe" stroke-width="0.4" stroke-linejoin="round"/><path d="M250.0 253.8 L252.0 250.5 L253.6 252.6 L252.0 258.7 L250.3 260.0Z" fill="#a4cdfe" stroke="#a4cdfe" stroke-width="0.4" stroke-linejoin="round"/><path d="M257.6 246.5 L259.9 241.6 L263.0 236.9 L266.9 231.5 L270.7 226.1 L274.6 220.6 L276.9 216.8 L280.8 216.8 L278.5 222.2 L274.6 227.6 L270.7 233.0 L267.3 239.2 L264.5 244.7 L261.4 247.8Z" fill="#a4cdfe" stroke="#a4cdfe" stroke-width="0.4" stroke-linejoin="round"/><path d="M302.1 216.0 L303.7 220.9 L310.3 225.0 L315.1 227.4 L318.4 230.7 L320.0 237.2 L319.7 243.7 L318.4 251.0 L316.0 255.9 L312.7 258.7 L315.1 262.4 L319.2 259.2 L323.3 255.9 L326.5 256.7 L329.0 263.2 L330.6 271.4 L330.9 278.7 L332.2 280.3 L333.9 274.6 L335.5 266.5 L337.9 259.2 L342.8 252.6 L347.7 246.9 L348.5 240.4 L346.1 234.7 L343.6 233.1 L344.5 230.7 L347.7 232.3 L351.0 237.2 L354.2 242.1 L359.1 245.3 L364.0 244.5 L366.4 242.1 L364.8 237.2 L360.7 233.1 L355.9 229.0 L354.2 224.1 L356.7 220.1 L359.1 216.0Z" fill="#a4cdfe" stroke="#a4cdfe" stroke-width="0.4" stroke-linejoin="round"/><path d="M319.0 298.7 L322.2 293.0 L326.3 290.6 L332.8 288.1 L339.3 284.9 L345.8 282.4 L354.0 280.8 L363.7 278.7 L373.5 277.5 L379.2 276.7 L380.8 278.0 L378.4 279.6 L373.5 281.9 L367.8 284.5 L363.7 287.3 L357.2 290.6 L350.7 294.3 L345.0 297.9 L338.5 301.1 L332.8 303.1 L326.3 302.4 L321.4 300.8Z" fill="#a4cdfe" stroke="#a4cdfe" stroke-width="0.4" stroke-linejoin="round"/><path d="M326.0 284.2 L328.2 283.6 L330.2 284.9 L329.9 287.1 L327.6 288.1 L325.8 286.8Z" fill="#a4cdfe" stroke="#a4cdfe" stroke-width="0.4" stroke-linejoin="round"/><path d="M368.6 268.6 L370.3 265.3 L374.3 262.9 L380.0 260.4 L388.2 258.0 L396.3 255.5 L404.5 253.6 L411.0 252.3 L415.9 253.1 L417.5 257.2 L416.7 262.1 L413.4 266.1 L407.7 268.6 L401.2 270.2 L394.7 269.9 L388.2 268.6 L381.7 269.4 L376.8 271.0 L372.7 271.0Z" fill="#a4cdfe" stroke="#a4cdfe" stroke-width="0.4" stroke-linejoin="round"/><path d="M371.9 247.1 L373.8 246.1 L375.5 247.7 L374.8 250.0 L372.5 250.0Z" fill="#a4cdfe" stroke="#a4cdfe" stroke-width="0.4" stroke-linejoin="round"/><path d="M61.9 219.5 L141.4 219.5" fill="none" stroke="#adafa5" stroke-width="0.6" stroke-dasharray="3.4 1.5"/><path d="M141.4 219.5 L139.4 225.7 L143.7 231.5 L143.7 264.4" fill="none" stroke="#adafa5" stroke-width="0.6" stroke-dasharray="3.4 1.5"/><path d="M143.7 265.4 L215.0 265.4" fill="none" stroke="#adafa5" stroke-width="0.6" stroke-dasharray="3.4 1.5"/><path d="M61.9 275.1 L116.2 275.1 L123.9 278.0 L137.5 278.0 L141.4 281.9 L145.2 289.6 L149.1 299.3 L151.0 309.0" fill="none" stroke="#adafa5" stroke-width="0.6" stroke-dasharray="3.4 1.5"/><path d="M213.0 241.2 L215.0 254.7 L213.0 264.4 L215.0 274.1 L214.0 283.8" fill="none" stroke="#adafa5" stroke-width="0.6" stroke-dasharray="3.4 1.5"/><path d="M220.0 284.2 L260.7 284.2" fill="none" stroke="#adafa5" stroke-width="0.6" stroke-dasharray="3.4 1.5"/><path d="M257.8 219.9 L261.6 227.6 L262.6 235.4" fill="none" stroke="#adafa5" stroke-width="0.6" stroke-dasharray="3.4 1.5"/><path d="M271.3 229.6 L277.1 230.5 L273.3 245.1 L269.4 264.4 L266.9 283.8 L267.5 297.4" fill="none" stroke="#adafa5" stroke-width="0.6" stroke-dasharray="3.4 1.5"/><path d="M267.5 298.3 L297.5 298.3 L316.9 298.9" fill="none" stroke="#adafa5" stroke-width="0.6" stroke-dasharray="3.4 1.5"/><path d="M300.4 299.3 L300.4 316.0" fill="none" stroke="#adafa5" stroke-width="0.6" stroke-dasharray="3.4 1.5"/><path d="M266.5 301.2 L266.5 316.0" fill="none" stroke="#adafa5" stroke-width="0.6" stroke-dasharray="3.4 1.5"/><path d="M357.5 293.5 L357.9 316.0" fill="none" stroke="#adafa5" stroke-width="0.6" stroke-dasharray="3.4 1.5"/><path d="M452.6 239.2 L454.6 254.7 L455.5 279.9" fill="none" stroke="#adafa5" stroke-width="0.6" stroke-dasharray="3.4 1.5"/><path d="M485.6 235.4 L484.6 254.7 L480.7 279.9" fill="none" stroke="#adafa5" stroke-width="0.6" stroke-dasharray="3.4 1.5"/><path d="M455.5 280.3 L488.5 279.9" fill="none" stroke="#adafa5" stroke-width="0.6" stroke-dasharray="3.4 1.5"/><path d="M452.6 292.5 L476.9 292.5 L480.7 295.4" fill="none" stroke="#adafa5" stroke-width="0.6" stroke-dasharray="3.4 1.5"/><path d="M476.9 292.5 L476.5 303.2" fill="none" stroke="#adafa5" stroke-width="0.6" stroke-dasharray="3.4 1.5"/><path d="M380.0 293.5 L428.4 293.5 L431.3 301.2" fill="none" stroke="#adafa5" stroke-width="0.6" stroke-dasharray="3.4 1.5"/><path d="M452.6 292.5 L451.7 307.0" fill="none" stroke="#adafa5" stroke-width="0.6" stroke-dasharray="3.4 1.5"/><path d="M488.5 279.9 L492.3 264.4 L493.3 237.3" fill="none" stroke="#adafa5" stroke-width="0.6" stroke-dasharray="3.4 1.5"/><path d="M68.1 329.2 L156.9 329.2 L160.7 331.5 L164.6 337.3" fill="none" stroke="#adafa5" stroke-width="0.6" stroke-dasharray="3.4 1.5"/><path d="M68.1 329.2 L68.1 379.9" fill="none" stroke="#adafa5" stroke-width="0.6" stroke-dasharray="3.4 1.5"/><path d="M61.9 379.9 L168.5 379.9" fill="none" stroke="#adafa5" stroke-width="0.6" stroke-dasharray="3.4 1.5"/><path d="M168.5 347.0 L168.9 379.9" fill="none" stroke="#adafa5" stroke-width="0.6" stroke-dasharray="3.4 1.5"/><path d="M168.5 389.2 L220.0 389.2" fill="none" stroke="#adafa5" stroke-width="0.6" stroke-dasharray="3.4 1.5"/><path d="M168.9 389.2 L171.4 409.0" fill="none" stroke="#adafa5" stroke-width="0.6" stroke-dasharray="3.4 1.5"/><path d="M61.9 389.2 L95.8 389.2 L95.8 416.0" fill="none" stroke="#adafa5" stroke-width="0.6" stroke-dasharray="3.4 1.5"/><path d="M258.7 316.0 L257.8 345.1 L252.9 354.7 L268.4 362.5 L287.8 354.7 L301.4 348.9 L316.9 350.9 L328.5 347.0" fill="none" stroke="#adafa5" stroke-width="0.6" stroke-dasharray="3.4 1.5"/><path d="M300.4 316.0 L300.4 345.1" fill="none" stroke="#adafa5" stroke-width="0.6" stroke-dasharray="3.4 1.5"/><path d="M220.0 389.2 L307.2 389.2 L336.2 387.7 L380.0 387.7" fill="none" stroke="#adafa5" stroke-width="0.6" stroke-dasharray="3.4 1.5"/><path d="M336.2 374.1 L355.6 378.0 L371.1 364.4" fill="none" stroke="#adafa5" stroke-width="0.6" stroke-dasharray="3.4 1.5"/><path d="M357.5 316.0 L357.9 327.6" fill="none" stroke="#adafa5" stroke-width="0.6" stroke-dasharray="3.4 1.5"/><path d="M380.0 388.1 L421.6 388.1" fill="none" stroke="#adafa5" stroke-width="0.6" stroke-dasharray="3.4 1.5"/><path d="M95.8 416.0 L96.8 421.8 L108.4 425.7 L118.1 428.6 L127.8 430.5 L141.4 431.5 L153.0 433.4 L168.5 431.5 L171.4 427.6" fill="none" stroke="#adafa5" stroke-width="0.6" stroke-dasharray="3.4 1.5"/><path d="M171.4 416.0 L170.4 427.6 L176.2 441.2 L177.2 464.4 L182.0 479.9 L181.1 493.5" fill="none" stroke="#adafa5" stroke-width="0.6" stroke-dasharray="3.4 1.5"/><path d="M177.2 446.0 L213.0 446.0" fill="none" stroke="#adafa5" stroke-width="0.6" stroke-dasharray="3.4 1.5"/><path d="M220.0 435.4 L215.0 454.7 L211.1 474.1" fill="none" stroke="#adafa5" stroke-width="0.6" stroke-dasharray="3.4 1.5"/><path d="M209.2 478.0 L220.0 478.0" fill="none" stroke="#adafa5" stroke-width="0.6" stroke-dasharray="3.4 1.5"/><path d="M255.8 416.0 L253.9 439.2 L251.0 464.4 L252.0 486.7" fill="none" stroke="#adafa5" stroke-width="0.6" stroke-dasharray="3.4 1.5"/><path d="M292.6 416.0 L294.6 435.4 L298.5 454.7 L297.5 478.0" fill="none" stroke="#adafa5" stroke-width="0.6" stroke-dasharray="3.4 1.5"/><path d="M255.8 477.6 L297.5 477.6" fill="none" stroke="#adafa5" stroke-width="0.6" stroke-dasharray="3.4 1.5"/><path d="M298.5 480.9 L320.7 483.8 L336.2 481.9 L340.1 485.7" fill="none" stroke="#adafa5" stroke-width="0.6" stroke-dasharray="3.4 1.5"/><path d="M324.6 419.9 L336.2 433.4 L347.8 448.9 L353.7 460.6" fill="none" stroke="#adafa5" stroke-width="0.6" stroke-dasharray="3.4 1.5"/><path d="M220.0 477.6 L231.6 477.6 L233.6 488.6" fill="none" stroke="#adafa5" stroke-width="0.6" stroke-dasharray="3.4 1.5"/><path d="M138.5 217.9 L136.5 223.7 L136.5 231.5 L139.0 241.2 L139.4 254.7 L139.0 279.9 L143.3 285.7 L148.1 295.4 L150.7 302.2 L152.0 307.0 L151.0 316.0" fill="none" stroke="#f3c581" stroke-width="1.12" stroke-linejoin="round" stroke-linecap="round"/><path d="M61.9 254.7 L64.8 257.1 L69.7 259.0 L81.3 257.6 L98.7 259.0 L110.4 261.5 L123.9 262.9 L139.4 263.1 L168.5 263.1 L185.9 262.5 L193.7 260.9 L197.5 258.2 L203.3 257.1 L220.0 257.6" fill="none" stroke="#f3c581" stroke-width="1.12" stroke-linejoin="round" stroke-linecap="round"/><path d="M186.9 238.3 L186.3 250.9 L185.5 262.5 L184.0 279.9 L182.4 299.3 L180.1 307.0 L179.1 316.0" fill="none" stroke="#f3c581" stroke-width="1.12" stroke-linejoin="round" stroke-linecap="round"/><path d="M151.0 217.9 L156.9 220.8 L164.6 224.7 L174.3 227.6 L184.0 234.4 L186.9 238.3" fill="none" stroke="#f3c581" stroke-width="1.12" stroke-linejoin="round" stroke-linecap="round"/><path d="M189.8 217.9 L189.4 227.6 L186.9 238.3" fill="none" stroke="#f3c581" stroke-width="1.12" stroke-linejoin="round" stroke-linecap="round"/><path d="M61.9 311.3 L71.6 308.8 L83.2 309.4 L94.9 311.9 L104.6 316.0" fill="none" stroke="#f3c581" stroke-width="1.12" stroke-linejoin="round" stroke-linecap="round"/><path d="M151.0 306.1 L153.0 302.2 L160.7 301.2 L182.4 299.7 L207.2 299.3 L220.0 299.7" fill="none" stroke="#f3c581" stroke-width="1.12" stroke-linejoin="round" stroke-linecap="round"/><path d="M199.5 284.8 L204.3 287.7 L207.6 292.5 L208.2 298.9" fill="none" stroke="#f3c581" stroke-width="1.12" stroke-linejoin="round" stroke-linecap="round"/><path d="M220.0 251.8 L225.8 256.7 L231.6 261.5" fill="none" stroke="#f3c581" stroke-width="1.12" stroke-linejoin="round" stroke-linecap="round"/><path d="M236.5 245.1 L237.0 258.6 L239.4 267.3" fill="none" stroke="#f3c581" stroke-width="1.12" stroke-linejoin="round" stroke-linecap="round"/><path d="M256.8 247.0 L257.8 260.6" fill="none" stroke="#f3c581" stroke-width="1.12" stroke-linejoin="round" stroke-linecap="round"/><path d="M283.9 280.9 L293.6 279.0 L303.3 279.5 L314.9 277.6 L320.7 281.9 L324.0 287.3" fill="none" stroke="#f3c581" stroke-width="1.12" stroke-linejoin="round" stroke-linecap="round"/><path d="M303.3 279.5 L309.1 274.5 L316.9 274.1 L324.6 275.1 L334.3 274.1" fill="none" stroke="#f3c581" stroke-width="1.12" stroke-linejoin="round" stroke-linecap="round"/><path d="M301.4 217.9 L302.3 227.6 L303.3 239.2 L305.2 248.9 L311.0 254.7 L313.9 264.4 L314.9 277.6" fill="none" stroke="#f3c581" stroke-width="1.12" stroke-linejoin="round" stroke-linecap="round"/><path d="M324.0 287.3 L321.7 292.5 L319.8 298.3 L316.9 303.2 L315.9 316.0" fill="none" stroke="#f3c581" stroke-width="1.12" stroke-linejoin="round" stroke-linecap="round"/><path d="M324.0 287.3 L332.3 283.8 L344.0 279.0 L355.6 274.1 L365.3 268.3 L373.0 262.9 L380.0 260.2" fill="none" stroke="#f3c581" stroke-width="1.12" stroke-linejoin="round" stroke-linecap="round"/><path d="M334.3 274.1 L344.0 279.0" fill="none" stroke="#f3c581" stroke-width="1.12" stroke-linejoin="round" stroke-linecap="round"/><path d="M373.0 262.9 L371.1 254.7 L369.2 245.1 L370.1 235.4 L367.2 227.6 L363.3 217.9" fill="none" stroke="#f3c581" stroke-width="1.12" stroke-linejoin="round" stroke-linecap="round"/><path d="M280.0 287.7 L281.0 274.1 L283.0 262.5" fill="none" stroke="#f3c581" stroke-width="1.12" stroke-linejoin="round" stroke-linecap="round"/><path d="M259.8 300.0 L263.7 300.6 L273.0 298.7 L282.3 297.5 L291.6 296.9 L300.9 297.2 L308.6 297.2 L319.5 298.7 L335.0 300.6" fill="none" stroke="#f3c581" stroke-width="1.12" stroke-linejoin="round" stroke-linecap="round"/><path d="M243.2 273.9 L243.5 284.8" fill="none" stroke="#f3c581" stroke-width="1.12" stroke-linejoin="round" stroke-linecap="round"/><path d="M254.7 286.0 L252.8 280.1 L243.5 277.0 L238.9 273.2 L237.3 266.2 L235.0 261.5 L231.6 258.5" fill="none" stroke="#f3c581" stroke-width="1.12" stroke-linejoin="round" stroke-linecap="round"/><path d="M260.6 296.4 L258.3 287.9 L257.5 278.6 L257.5 269.3 L258.3 260.0 L257.5 250.7 L255.9 238.3" fill="none" stroke="#f3c581" stroke-width="1.12" stroke-linejoin="round" stroke-linecap="round"/><path d="M242.0 274.3 L249.7 274.7 L257.5 274.7" fill="none" stroke="#f3c581" stroke-width="1.12" stroke-linejoin="round" stroke-linecap="round"/><path d="M243.5 284.8 L251.3 280.1 L257.5 275.5" fill="none" stroke="#f3c581" stroke-width="1.12" stroke-linejoin="round" stroke-linecap="round"/><path d="M263.7 300.6 L264.5 309.6 L266.8 317.3 L273.0 323.5 L279.2 329.7 L282.0 332.8" fill="none" stroke="#f3c581" stroke-width="1.12" stroke-linejoin="round" stroke-linecap="round"/><path d="M224.9 306.5 L229.6 312.7 L237.3 317.3 L243.8 319.7 L252.8 325.1 L262.1 327.4 L273.0 329.7 L282.0 332.8" fill="none" stroke="#f3c581" stroke-width="1.12" stroke-linejoin="round" stroke-linecap="round"/><path d="M211.8 328.2 L213.3 333.6 L221.8 335.2 L234.2 332.8 L242.0 332.1 L252.8 325.9" fill="none" stroke="#f3c581" stroke-width="1.12" stroke-linejoin="round" stroke-linecap="round"/><path d="M282.0 332.8 L288.5 322.0 L294.7 312.7 L296.2 308.0 L297.8 298.7 L298.5 287.9 L299.3 280.1 L299.6 269.3 L300.1 260.0" fill="none" stroke="#f3c581" stroke-width="1.12" stroke-linejoin="round" stroke-linecap="round"/><path d="M273.0 298.7 L279.2 288.7 L288.5 288.7 L299.3 287.9 L308.0 283.2 L316.4 280.1 L330.0 279.4" fill="none" stroke="#f3c581" stroke-width="1.12" stroke-linejoin="round" stroke-linecap="round"/><path d="M279.2 288.7 L281.5 280.1 L280.0 273.9 L280.7 266.2 L282.3 260.0 L283.1 253.8" fill="none" stroke="#f3c581" stroke-width="1.12" stroke-linejoin="round" stroke-linecap="round"/><path d="M282.0 332.8 L291.6 334.4 L304.0 332.8 L308.0 332.8" fill="none" stroke="#f3c581" stroke-width="1.12" stroke-linejoin="round" stroke-linecap="round"/><path d="M242.0 274.3 L242.1 274.4" fill="none" stroke="#f3c581" stroke-width="1.12" stroke-linejoin="round" stroke-linecap="round"/><path d="M212.1 300.7 L216.0 300.5 L221.8 300.5 L225.7 299.6 L231.5 297.1 L238.3 295.7 L245.1 295.2 L252.8 295.7 L257.6 295.7" fill="none" stroke="#f3c581" stroke-width="1.12" stroke-linejoin="round" stroke-linecap="round"/><path d="M221.8 301.5 L225.7 303.4 L233.4 303.9 L243.1 303.9 L250.9 303.4 L254.7 301.5 L258.6 299.6 L261.5 299.1 L266.4 299.6" fill="none" stroke="#f3c581" stroke-width="1.12" stroke-linejoin="round" stroke-linecap="round"/><path d="M244.1 286.0 L243.6 295.7 L243.1 303.9 L243.6 311.2 L244.1 318.0 L243.6 319.9" fill="none" stroke="#f3c581" stroke-width="1.12" stroke-linejoin="round" stroke-linecap="round"/><path d="M258.6 299.6 L254.7 304.4 L250.9 309.2 L247.0 315.1 L244.1 319.4 L243.6 320.4 L240.2 322.8 L237.3 326.7 L236.3 331.5 L235.9 336.0" fill="none" stroke="#f3c581" stroke-width="1.12" stroke-linejoin="round" stroke-linecap="round"/><path d="M259.6 299.6 L258.6 305.4 L257.6 312.2 L256.2 318.9 L254.7 324.7 L253.8 330.6 L252.8 336.0" fill="none" stroke="#f3c581" stroke-width="1.12" stroke-linejoin="round" stroke-linecap="round"/><path d="M225.7 303.4 L225.7 311.2 L230.5 315.1 L235.4 317.0 L239.2 318.9 L243.6 319.9" fill="none" stroke="#f3c581" stroke-width="1.12" stroke-linejoin="round" stroke-linecap="round"/><path d="M257.6 295.7 L258.6 291.8 L256.7 287.9 L254.7 286.0" fill="none" stroke="#f3c581" stroke-width="1.12" stroke-linejoin="round" stroke-linecap="round"/><path d="M200.0 347.2 L209.3 348.0 L220.1 350.6 L226.3 351.8" fill="none" stroke="#f3c581" stroke-width="1.12" stroke-linejoin="round" stroke-linecap="round"/><path d="M226.3 351.8 L235.6 348.7 L246.5 345.6 L254.2 341.0 L262.0 338.7 L272.8 335.6 L282.1 333.2" fill="none" stroke="#f3c581" stroke-width="1.12" stroke-linejoin="round" stroke-linecap="round"/><path d="M308.5 330.9 L324.0 329.4" fill="none" stroke="#f3c581" stroke-width="1.12" stroke-linejoin="round" stroke-linecap="round"/><path d="M226.3 351.8 L231.0 347.2 L234.1 341.0 L235.0 336.0" fill="none" stroke="#f3c581" stroke-width="1.12" stroke-linejoin="round" stroke-linecap="round"/><path d="M252.7 334.8 L249.6 345.6 L244.9 354.9 L244.2 362.7 L244.9 372.0 L248.0 378.2" fill="none" stroke="#f3c581" stroke-width="1.12" stroke-linejoin="round" stroke-linecap="round"/><path d="M226.3 351.8 L235.6 356.5 L244.9 358.8 L255.8 360.4 L265.1 359.9 L277.5 359.9 L289.1 359.6 L299.2 356.5 L305.4 361.1 L317.8 359.6 L328.0 356.5" fill="none" stroke="#f3c581" stroke-width="1.12" stroke-linejoin="round" stroke-linecap="round"/><path d="M282.1 333.2 L284.5 341.0 L286.8 350.3 L289.1 359.6 L286.8 368.9 L282.1 378.2 L277.5 385.9 L274.4 390.0" fill="none" stroke="#f3c581" stroke-width="1.12" stroke-linejoin="round" stroke-linecap="round"/><path d="M282.1 333.2 L293.0 337.9 L300.7 341.8 L304.6 343.3" fill="none" stroke="#f3c581" stroke-width="1.12" stroke-linejoin="round" stroke-linecap="round"/><path d="M289.1 359.6 L296.1 353.4 L300.7 347.2 L304.6 343.3 L313.1 336.3 L324.0 329.4" fill="none" stroke="#f3c581" stroke-width="1.12" stroke-linejoin="round" stroke-linecap="round"/><path d="M304.6 343.3 L303.8 353.4 L305.4 361.1 L306.9 372.0 L308.5 381.3 L310.0 390.0" fill="none" stroke="#f3c581" stroke-width="1.12" stroke-linejoin="round" stroke-linecap="round"/><path d="M304.6 343.3 L308.5 333.2 L311.6 322.4 L313.1 310.0" fill="none" stroke="#f3c581" stroke-width="1.12" stroke-linejoin="round" stroke-linecap="round"/><path d="M226.3 351.8 L224.8 359.6 L229.4 367.3 L234.1 375.1 L237.2 382.8 L238.7 390.0" fill="none" stroke="#f3c581" stroke-width="1.12" stroke-linejoin="round" stroke-linecap="round"/><path d="M226.3 351.8 L218.6 358.0 L209.3 362.7 L200.0 365.8" fill="none" stroke="#f3c581" stroke-width="1.12" stroke-linejoin="round" stroke-linecap="round"/><path d="M244.9 372.0 L248.0 378.2 L254.2 381.3 L263.5 384.4 L266.6 387.5" fill="none" stroke="#f3c581" stroke-width="1.12" stroke-linejoin="round" stroke-linecap="round"/><path d="M264.3 361.1 L263.8 372.0 L264.3 382.8 L265.1 387.5" fill="none" stroke="#f3c581" stroke-width="1.12" stroke-linejoin="round" stroke-linecap="round"/><path d="M275.9 344.9 L269.7 348.7 L265.1 356.5 L264.3 361.1" fill="none" stroke="#f3c581" stroke-width="1.12" stroke-linejoin="round" stroke-linecap="round"/><path d="M380.0 253.8 L387.7 248.9 L397.4 245.1 L409.1 241.2 L418.7 237.3 L430.4 233.4 L442.0 230.5 L451.3 228.0" fill="none" stroke="#f3c581" stroke-width="1.12" stroke-linejoin="round" stroke-linecap="round"/><path d="M422.6 229.6 L434.2 227.6 L451.3 228.0" fill="none" stroke="#f3c581" stroke-width="1.12" stroke-linejoin="round" stroke-linecap="round"/><path d="M422.6 229.6 L421.6 237.3 L418.7 241.2" fill="none" stroke="#f3c581" stroke-width="1.12" stroke-linejoin="round" stroke-linecap="round"/><path d="M418.7 241.2 L419.7 254.7 L418.7 268.3 L417.8 279.9 L420.7 291.5 L426.5 301.2 L430.4 316.0" fill="none" stroke="#f3c581" stroke-width="1.12" stroke-linejoin="round" stroke-linecap="round"/><path d="M380.0 276.0 L391.6 274.1 L403.2 273.1 L418.7 272.2 L430.4 274.1 L443.9 276.0 L451.7 279.9 L465.2 284.8 L476.9 289.6 L482.7 293.5" fill="none" stroke="#f3c581" stroke-width="1.12" stroke-linejoin="round" stroke-linecap="round"/><path d="M451.3 228.0 L452.6 239.2 L452.1 254.7 L450.7 268.3 L451.7 279.9 L449.7 293.5 L446.8 305.1 L445.9 312.9" fill="none" stroke="#f3c581" stroke-width="1.12" stroke-linejoin="round" stroke-linecap="round"/><path d="M451.3 228.0 L461.4 233.4 L467.2 241.2 L471.0 250.9 L469.1 264.4 L467.2 279.9 L466.2 293.5 L467.2 303.2" fill="none" stroke="#f3c581" stroke-width="1.12" stroke-linejoin="round" stroke-linecap="round"/><path d="M473.0 227.6 L474.9 245.1 L478.8 260.6 L480.7 274.1 L482.7 285.7 L482.7 293.5" fill="none" stroke="#f3c581" stroke-width="1.12" stroke-linejoin="round" stroke-linecap="round"/><path d="M540.0 221.8 L527.2 227.6 L515.6 235.4 L507.8 245.1 L500.1 254.7 L494.3 264.4 L488.5 276.0 L482.7 293.5 L480.7 299.3 L471.0 305.1 L461.4 309.0 L449.7 314.8" fill="none" stroke="#f3c581" stroke-width="1.12" stroke-linejoin="round" stroke-linecap="round"/><path d="M451.3 228.0 L463.3 223.7 L476.9 219.9 L488.5 217.9" fill="none" stroke="#f3c581" stroke-width="1.12" stroke-linejoin="round" stroke-linecap="round"/><path d="M380.0 289.6 L391.6 287.7 L403.2 285.7 L417.8 279.9" fill="none" stroke="#f3c581" stroke-width="1.12" stroke-linejoin="round" stroke-linecap="round"/><path d="M417.8 279.9 L430.4 285.7 L443.9 283.8 L451.7 279.9" fill="none" stroke="#f3c581" stroke-width="1.12" stroke-linejoin="round" stroke-linecap="round"/><path d="M426.5 301.2 L438.1 299.3 L449.7 293.5 L461.4 293.5 L471.0 291.5 L480.7 292.5" fill="none" stroke="#f3c581" stroke-width="1.12" stroke-linejoin="round" stroke-linecap="round"/><path d="M403.2 273.1 L404.2 281.9 L403.2 285.7" fill="none" stroke="#f3c581" stroke-width="1.12" stroke-linejoin="round" stroke-linecap="round"/><path d="M97.8 316.0 L108.4 317.5 L118.1 316.0" fill="none" stroke="#f3c581" stroke-width="1.12" stroke-linejoin="round" stroke-linecap="round"/><path d="M61.9 341.2 L71.6 340.2 L81.3 340.2 L85.2 343.1 L94.9 346.0 L108.4 347.4 L125.9 348.0 L141.4 346.0 L156.9 345.1 L168.9 345.1 L184.0 346.0 L199.5 347.0 L211.1 348.5 L220.0 349.9" fill="none" stroke="#f3c581" stroke-width="1.12" stroke-linejoin="round" stroke-linecap="round"/><path d="M178.2 316.0 L176.2 323.7 L173.3 333.4 L168.9 345.1" fill="none" stroke="#f3c581" stroke-width="1.12" stroke-linejoin="round" stroke-linecap="round"/><path d="M153.0 316.0 L160.7 319.9 L165.6 331.5 L168.9 345.1" fill="none" stroke="#f3c581" stroke-width="1.12" stroke-linejoin="round" stroke-linecap="round"/><path d="M153.0 318.3 L164.6 319.5 L178.2 318.3 L195.6 318.3 L207.2 317.9" fill="none" stroke="#f3c581" stroke-width="1.12" stroke-linejoin="round" stroke-linecap="round"/><path d="M168.9 345.1 L162.7 349.9 L154.9 353.8 L147.2 355.7 L141.4 361.5 L133.6 367.3 L132.1 369.3" fill="none" stroke="#f3c581" stroke-width="1.12" stroke-linejoin="round" stroke-linecap="round"/><path d="M168.9 345.1 L156.9 347.0 L151.0 349.9 L147.2 355.7" fill="none" stroke="#f3c581" stroke-width="1.12" stroke-linejoin="round" stroke-linecap="round"/><path d="M126.8 348.0 L127.8 356.7 L131.3 363.5 L132.1 369.3" fill="none" stroke="#f3c581" stroke-width="1.12" stroke-linejoin="round" stroke-linecap="round"/><path d="M132.1 369.3 L131.7 379.9 L131.7 393.5 L131.7 403.2 L128.8 408.0 L127.8 410.9" fill="none" stroke="#f3c581" stroke-width="1.12" stroke-linejoin="round" stroke-linecap="round"/><path d="M168.9 345.1 L170.4 358.6 L171.4 379.9 L173.3 389.6 L174.3 399.3 L172.3 407.0 L172.0 416.0" fill="none" stroke="#f3c581" stroke-width="1.12" stroke-linejoin="round" stroke-linecap="round"/><path d="M220.0 361.5 L211.1 363.5 L203.3 366.0 L195.6 371.2 L189.8 375.1 L180.1 377.6 L171.4 379.9 L164.6 384.8 L156.9 390.6 L149.1 395.4 L141.4 400.3 L133.6 405.5 L128.8 407.0" fill="none" stroke="#f3c581" stroke-width="1.12" stroke-linejoin="round" stroke-linecap="round"/><path d="M61.9 410.9 L75.5 409.9 L89.1 409.6 L108.4 407.4 L127.8 406.7 L141.4 405.5 L153.0 405.5 L172.3 406.3 L185.9 408.6 L199.5 410.9 L220.0 410.5" fill="none" stroke="#f3c581" stroke-width="1.12" stroke-linejoin="round" stroke-linecap="round"/><path d="M128.8 407.0 L123.9 412.9 L120.0 416.0" fill="none" stroke="#f3c581" stroke-width="1.12" stroke-linejoin="round" stroke-linecap="round"/><path d="M128.8 407.0 L130.1 416.0" fill="none" stroke="#f3c581" stroke-width="1.12" stroke-linejoin="round" stroke-linecap="round"/><path d="M213.0 327.6 L215.0 333.4 L220.0 335.4" fill="none" stroke="#f3c581" stroke-width="1.12" stroke-linejoin="round" stroke-linecap="round"/><path d="M324.6 329.2 L324.8 329.4" fill="none" stroke="#f3c581" stroke-width="1.12" stroke-linejoin="round" stroke-linecap="round"/><path d="M327.9 356.5 L336.2 355.7 L347.8 360.6 L355.6 368.3 L367.2 366.4 L380.0 362.5" fill="none" stroke="#f3c581" stroke-width="1.12" stroke-linejoin="round" stroke-linecap="round"/><path d="M230.5 410.9 L239.4 406.1 L251.0 401.2 L262.6 397.0 L274.2 394.6 L293.6 397.4 L311.0 397.4 L324.6 393.5 L340.1 389.6 L355.6 387.7 L367.2 393.5 L380.0 393.5" fill="none" stroke="#f3c581" stroke-width="1.12" stroke-linejoin="round" stroke-linecap="round"/><path d="M266.5 388.1 L274.2 394.6 L283.9 401.2 L291.7 412.9" fill="none" stroke="#f3c581" stroke-width="1.12" stroke-linejoin="round" stroke-linecap="round"/><path d="M310.1 390.0 L310.1 397.4 L311.0 416.0" fill="none" stroke="#f3c581" stroke-width="1.12" stroke-linejoin="round" stroke-linecap="round"/><path d="M380.0 341.2 L375.0 354.7 L367.2 366.4 L355.6 374.1 L340.1 383.8 L324.6 393.5 L311.0 399.3" fill="none" stroke="#f3c581" stroke-width="1.12" stroke-linejoin="round" stroke-linecap="round"/><path d="M344.0 328.6 L345.9 341.2 L347.8 360.6 L351.7 379.9 L353.7 393.5 L353.3 409.9" fill="none" stroke="#f3c581" stroke-width="1.12" stroke-linejoin="round" stroke-linecap="round"/><path d="M359.5 327.6 L355.6 341.2 L347.8 360.6" fill="none" stroke="#f3c581" stroke-width="1.12" stroke-linejoin="round" stroke-linecap="round"/><path d="M353.3 409.9 L363.3 403.2 L373.0 395.4 L380.0 391.5" fill="none" stroke="#f3c581" stroke-width="1.12" stroke-linejoin="round" stroke-linecap="round"/><path d="M324.6 393.5 L332.3 403.2 L340.1 416.0" fill="none" stroke="#f3c581" stroke-width="1.12" stroke-linejoin="round" stroke-linecap="round"/><path d="M274.4 390.0 L274.2 394.6 L273.3 405.1 L272.3 416.0" fill="none" stroke="#f3c581" stroke-width="1.12" stroke-linejoin="round" stroke-linecap="round"/><path d="M238.7 390.0 L236.5 399.3 L230.5 410.9" fill="none" stroke="#f3c581" stroke-width="1.12" stroke-linejoin="round" stroke-linecap="round"/><path d="M359.5 327.6 L363.3 319.9 L367.2 316.0" fill="none" stroke="#f3c581" stroke-width="1.12" stroke-linejoin="round" stroke-linecap="round"/><path d="M324.6 329.2 L328.5 341.2 L336.2 355.7" fill="none" stroke="#f3c581" stroke-width="1.12" stroke-linejoin="round" stroke-linecap="round"/><path d="M313.8 310.0 L311.0 319.9 L307.2 331.5 L304.6 343.3" fill="none" stroke="#f3c581" stroke-width="1.12" stroke-linejoin="round" stroke-linecap="round"/><path d="M445.9 316.0 L438.1 321.8 L430.0 329.9 L418.7 339.2 L405.2 348.9 L397.4 354.7 L398.4 366.4 L401.3 379.9 L397.4 393.5 L391.6 405.1 L385.8 416.0" fill="none" stroke="#f3c581" stroke-width="1.12" stroke-linejoin="round" stroke-linecap="round"/><path d="M401.3 379.9 L409.1 381.9 L415.8 383.8" fill="none" stroke="#f3c581" stroke-width="1.12" stroke-linejoin="round" stroke-linecap="round"/><path d="M397.4 393.5 L387.7 403.2 L380.0 409.0" fill="none" stroke="#f3c581" stroke-width="1.12" stroke-linejoin="round" stroke-linecap="round"/><path d="M397.4 354.7 L387.7 352.8 L380.0 356.7" fill="none" stroke="#f3c581" stroke-width="1.12" stroke-linejoin="round" stroke-linecap="round"/><path d="M405.2 348.9 L395.5 343.1 L385.8 337.3 L380.0 335.4" fill="none" stroke="#f3c581" stroke-width="1.12" stroke-linejoin="round" stroke-linecap="round"/><path d="M430.0 329.9 L418.7 325.7 L403.2 323.7 L391.6 327.6 L380.0 325.7" fill="none" stroke="#f3c581" stroke-width="1.12" stroke-linejoin="round" stroke-linecap="round"/><path d="M405.2 348.9 L407.1 335.4 L403.2 323.7" fill="none" stroke="#f3c581" stroke-width="1.12" stroke-linejoin="round" stroke-linecap="round"/><path d="M391.6 405.1 L403.2 407.0 L414.9 410.9" fill="none" stroke="#f3c581" stroke-width="1.12" stroke-linejoin="round" stroke-linecap="round"/><path d="M71.6 416.0 L72.0 425.7 L70.7 437.3" fill="none" stroke="#f3c581" stroke-width="1.12" stroke-linejoin="round" stroke-linecap="round"/><path d="M120.0 416.0 L117.1 423.7 L115.8 431.1" fill="none" stroke="#f3c581" stroke-width="1.12" stroke-linejoin="round" stroke-linecap="round"/><path d="M131.7 416.0 L134.6 423.7 L134.6 435.4 L133.6 445.1 L132.6 449.9" fill="none" stroke="#f3c581" stroke-width="1.12" stroke-linejoin="round" stroke-linecap="round"/><path d="M61.9 464.4 L71.6 459.6 L83.2 455.7 L98.7 454.7 L114.2 453.8 L125.9 450.9 L139.0 449.9 L149.1 451.8 L164.6 454.4 L180.1 452.8 L195.6 453.8 L211.1 455.7 L220.0 457.1" fill="none" stroke="#f3c581" stroke-width="1.12" stroke-linejoin="round" stroke-linecap="round"/><path d="M139.0 449.9 L149.1 445.1 L160.7 443.1 L170.4 440.2 L176.2 438.3 L184.0 432.5 L191.7 424.7 L197.5 417.9 L199.5 416.0" fill="none" stroke="#f3c581" stroke-width="1.12" stroke-linejoin="round" stroke-linecap="round"/><path d="M132.6 449.9 L134.6 456.7 L135.5 461.5 L133.6 468.3 L130.7 476.0 L127.8 482.8 L126.2 489.2 L122.0 496.4 L116.2 502.2 L117.1 509.0 L120.0 516.0" fill="none" stroke="#f3c581" stroke-width="1.12" stroke-linejoin="round" stroke-linecap="round"/><path d="M139.0 449.9 L137.5 457.6 L135.5 461.5" fill="none" stroke="#f3c581" stroke-width="1.12" stroke-linejoin="round" stroke-linecap="round"/><path d="M139.0 449.9 L142.3 458.6 L147.2 467.3 L152.0 476.0 L156.5 483.8 L156.9 489.6 L158.2 496.8" fill="none" stroke="#f3c581" stroke-width="1.12" stroke-linejoin="round" stroke-linecap="round"/><path d="M61.9 479.0 L71.6 480.9 L83.2 482.8 L94.9 485.3 L102.6 489.6 L110.4 496.4 L116.2 502.2" fill="none" stroke="#f3c581" stroke-width="1.12" stroke-linejoin="round" stroke-linecap="round"/><path d="M116.2 502.2 L125.9 499.3 L137.5 497.7 L149.1 497.4 L158.2 496.8 L168.5 493.5 L176.2 491.5 L187.8 489.6 L199.5 490.0 L211.1 490.6 L220.0 491.2" fill="none" stroke="#f3c581" stroke-width="1.12" stroke-linejoin="round" stroke-linecap="round"/><path d="M176.2 438.3 L177.2 447.0 L179.1 454.7 L184.0 462.5 L191.7 470.2 L199.5 476.0 L202.4 482.8 L203.3 489.6" fill="none" stroke="#f3c581" stroke-width="1.12" stroke-linejoin="round" stroke-linecap="round"/><path d="M116.2 502.2 L114.2 509.0 L110.4 516.0" fill="none" stroke="#f3c581" stroke-width="1.12" stroke-linejoin="round" stroke-linecap="round"/><path d="M158.2 496.8 L153.0 500.3 L151.0 501.2" fill="none" stroke="#f3c581" stroke-width="1.12" stroke-linejoin="round" stroke-linecap="round"/><path d="M158.2 496.8 L162.7 501.2 L165.6 505.1" fill="none" stroke="#f3c581" stroke-width="1.12" stroke-linejoin="round" stroke-linecap="round"/><path d="M216.9 435.4 L215.0 447.0 L214.0 456.7" fill="none" stroke="#f3c581" stroke-width="1.12" stroke-linejoin="round" stroke-linecap="round"/><path d="M201.4 421.8 L203.3 426.7" fill="none" stroke="#f3c581" stroke-width="1.12" stroke-linejoin="round" stroke-linecap="round"/><path d="M220.0 455.7 L227.7 456.7 L239.4 455.7 L251.0 453.8 L262.6 445.1 L273.3 437.3 L285.9 435.4 L297.5 434.4 L305.8 434.4 L316.9 436.3 L328.5 437.3 L338.2 438.3 L347.8 435.4 L355.6 433.4" fill="none" stroke="#f3c581" stroke-width="1.12" stroke-linejoin="round" stroke-linecap="round"/><path d="M273.3 437.3 L266.5 445.1 L256.8 456.7 L247.1 468.3 L239.4 479.9 L233.6 488.6 L229.3 493.9" fill="none" stroke="#f3c581" stroke-width="1.12" stroke-linejoin="round" stroke-linecap="round"/><path d="M272.3 416.0 L272.7 427.6 L273.3 437.3 L276.2 447.0 L279.1 455.7 L274.2 464.4 L266.5 474.1 L258.7 479.9 L255.8 484.8" fill="none" stroke="#f3c581" stroke-width="1.12" stroke-linejoin="round" stroke-linecap="round"/><path d="M305.8 434.4 L297.5 447.0 L287.8 453.8 L279.1 455.7" fill="none" stroke="#f3c581" stroke-width="1.12" stroke-linejoin="round" stroke-linecap="round"/><path d="M305.8 434.4 L301.4 425.7 L297.5 416.0" fill="none" stroke="#f3c581" stroke-width="1.12" stroke-linejoin="round" stroke-linecap="round"/><path d="M305.8 434.4 L316.9 425.7 L328.5 419.9 L336.2 416.0" fill="none" stroke="#f3c581" stroke-width="1.12" stroke-linejoin="round" stroke-linecap="round"/><path d="M305.8 434.4 L311.0 443.1 L314.9 448.9 L314.5 460.6 L316.9 472.2 L320.7 481.9 L328.5 491.5 L334.3 501.2 L336.2 516.0" fill="none" stroke="#f3c581" stroke-width="1.12" stroke-linejoin="round" stroke-linecap="round"/><path d="M314.9 448.9 L328.5 454.7 L340.1 458.6 L348.8 460.9" fill="none" stroke="#f3c581" stroke-width="1.12" stroke-linejoin="round" stroke-linecap="round"/><path d="M367.2 416.0 L363.3 427.6 L357.5 441.2 L351.7 454.7 L348.8 460.9 L345.9 472.2 L344.0 481.9 L342.6 488.3 L345.9 497.4 L349.8 507.0 L353.7 516.0" fill="none" stroke="#f3c581" stroke-width="1.12" stroke-linejoin="round" stroke-linecap="round"/><path d="M338.2 438.3 L347.8 445.1 L359.5 448.9 L366.2 449.9" fill="none" stroke="#f3c581" stroke-width="1.12" stroke-linejoin="round" stroke-linecap="round"/><path d="M338.2 438.3 L344.0 427.6 L351.7 419.9 L355.6 416.0" fill="none" stroke="#f3c581" stroke-width="1.12" stroke-linejoin="round" stroke-linecap="round"/><path d="M229.3 493.9 L239.4 488.6 L249.1 485.7 L255.8 484.8 L264.6 483.4 L278.1 481.9 L291.7 482.8 L303.3 484.8 L316.9 485.7 L328.5 488.1 L342.6 488.3" fill="none" stroke="#f3c581" stroke-width="1.12" stroke-linejoin="round" stroke-linecap="round"/><path d="M231.6 416.0 L232.6 431.5 L229.7 445.1 L227.7 456.7 L224.8 474.1 L223.9 489.6 L229.3 493.9" fill="none" stroke="#f3c581" stroke-width="1.12" stroke-linejoin="round" stroke-linecap="round"/><path d="M235.5 416.0 L247.1 423.7 L258.7 429.6 L273.3 437.3" fill="none" stroke="#f3c581" stroke-width="1.12" stroke-linejoin="round" stroke-linecap="round"/><path d="M336.2 516.0 L344.0 509.0 L347.8 503.2 L345.9 497.4" fill="none" stroke="#f3c581" stroke-width="1.12" stroke-linejoin="round" stroke-linecap="round"/><path d="M351.7 419.9 L355.6 433.4 L366.2 449.9" fill="none" stroke="#f3c581" stroke-width="1.12" stroke-linejoin="round" stroke-linecap="round"/><path d="M239.4 455.7 L237.4 468.3 L233.6 479.9 L231.6 488.6" fill="none" stroke="#f3c581" stroke-width="1.12" stroke-linejoin="round" stroke-linecap="round"/><path d="M245.2 455.7 L241.3 466.4 L239.4 479.9" fill="none" stroke="#f3c581" stroke-width="1.12" stroke-linejoin="round" stroke-linecap="round"/><path d="M160.0 405.6 L166.2 404.8 L171.6 406.7 L183.2 407.1 L191.0 408.7 L197.2 411.8 L199.5 418.0 L201.1 424.2 L203.4 426.5" fill="none" stroke="#f3c581" stroke-width="1.12" stroke-linejoin="round" stroke-linecap="round"/><path d="M201.8 421.8 L206.5 417.2 L211.1 414.4 L218.9 412.5 L226.6 411.0 L230.5 411.0" fill="none" stroke="#f3c581" stroke-width="1.12" stroke-linejoin="round" stroke-linecap="round"/><path d="M230.5 411.0 L228.2 407.1 L225.1 403.2 L222.0 400.1 L219.7 399.4" fill="none" stroke="#f3c581" stroke-width="1.12" stroke-linejoin="round" stroke-linecap="round"/><path d="M230.5 411.0 L232.8 403.2 L235.9 395.5 L237.5 387.7 L240.6 380.0" fill="none" stroke="#f3c581" stroke-width="1.12" stroke-linejoin="round" stroke-linecap="round"/><path d="M173.9 380.0 L173.2 389.3 L174.7 398.6 L171.6 406.7 L173.2 418.7 L175.5 438.9" fill="none" stroke="#f3c581" stroke-width="1.12" stroke-linejoin="round" stroke-linecap="round"/><path d="M186.7 238.5 L197.9 239.2 L207.2 240.0 L213.4 244.7 L218.0 250.9 L220.4 252.1" fill="none" stroke="#f3c581" stroke-width="1.12" stroke-linejoin="round" stroke-linecap="round"/><path d="M257.6 247.0 L252.1 251.6 L249.8 257.8 L252.1 265.6 L256.0 271.8 L258.3 274.9" fill="none" stroke="#f3c581" stroke-width="1.12" stroke-linejoin="round" stroke-linecap="round"/><path d="M242.8 274.9 L243.6 279.5 L245.9 284.2 L252.1 288.8 L258.3 292.7" fill="none" stroke="#f3c581" stroke-width="1.12" stroke-linejoin="round" stroke-linecap="round"/><path d="M199.4 284.2 L204.1 287.3 L208.7 291.9 L210.3 296.0" fill="none" stroke="#f3c581" stroke-width="1.12" stroke-linejoin="round" stroke-linecap="round"/><path d="M310.0 298.6 L316.2 300.1 L325.5 302.5 L334.8 304.8 L342.5 305.6 L350.3 300.1 L358.0 295.5 L365.8 290.1 L372.0 285.4 L378.2 281.5" fill="none" stroke="#f3c581" stroke-width="1.12" stroke-linejoin="round" stroke-linecap="round"/><path d="M316.2 300.1 L325.5 306.3 L334.8 308.7 L342.5 309.4 L353.4 308.7 L362.7 307.9 L375.1 307.6 L387.5 307.9 L396.8 308.7 L409.2 307.9 L418.5 308.7 L427.8 307.9 L438.0 306.3 L443.3 308.7 L446.4 315.6" fill="none" stroke="#f3c581" stroke-width="1.12" stroke-linejoin="round" stroke-linecap="round"/><path d="M342.5 309.4 L351.8 314.1 L359.6 318.7 L363.5 320.3 L372.0 324.9 L381.3 326.5" fill="none" stroke="#f3c581" stroke-width="1.12" stroke-linejoin="round" stroke-linecap="round"/><path d="M342.5 305.6 L337.9 314.1 L331.7 321.8 L324.7 328.8" fill="none" stroke="#f3c581" stroke-width="1.12" stroke-linejoin="round" stroke-linecap="round"/><path d="M343.3 309.4 L344.9 318.7 L344.9 329.6" fill="none" stroke="#f3c581" stroke-width="1.12" stroke-linejoin="round" stroke-linecap="round"/><path d="M361.1 292.4 L361.9 301.7 L362.7 311.0 L363.5 320.3 L362.7 331.1" fill="none" stroke="#f3c581" stroke-width="1.12" stroke-linejoin="round" stroke-linecap="round"/><path d="M310.0 331.1 L317.7 329.6 L324.7 328.8 L334.8 329.3 L344.9 329.6 L354.9 328.0 L363.5 326.5 L372.0 324.9" fill="none" stroke="#f3c581" stroke-width="1.12" stroke-linejoin="round" stroke-linecap="round"/><path d="M316.2 300.1 L315.4 311.0" fill="none" stroke="#f3c581" stroke-width="1.12" stroke-linejoin="round" stroke-linecap="round"/><path d="M418.5 280.0 L416.9 289.3 L421.6 297.0 L418.5 308.7 L410.7 317.2 L403.0 324.9 L396.8 329.6 L388.3 329.6 L382.8 337.3 L380.0 341.2" fill="none" stroke="#f3c581" stroke-width="1.12" stroke-linejoin="round" stroke-linecap="round"/><path d="M384.4 307.9 L385.9 317.2 L387.5 324.9" fill="none" stroke="#f3c581" stroke-width="1.12" stroke-linejoin="round" stroke-linecap="round"/><path d="M398.3 308.7 L399.9 318.7 L398.3 328.0" fill="none" stroke="#f3c581" stroke-width="1.12" stroke-linejoin="round" stroke-linecap="round"/><path d="M398.3 328.0 L409.2 324.9 L418.5 321.8 L427.8 318.7 L438.0 316.4" fill="none" stroke="#f3c581" stroke-width="1.12" stroke-linejoin="round" stroke-linecap="round"/><path d="M427.8 307.9 L426.2 318.7 L429.3 329.9" fill="none" stroke="#f3c581" stroke-width="1.12" stroke-linejoin="round" stroke-linecap="round"/><path d="M362.7 331.1 L372.0 333.5 L381.3 334.2" fill="none" stroke="#f3c581" stroke-width="1.12" stroke-linejoin="round" stroke-linecap="round"/><path d="M324.7 328.8 L320.8 337.3 L314.6 345.1 L310.0 349.7" fill="none" stroke="#f3c581" stroke-width="1.12" stroke-linejoin="round" stroke-linecap="round"/><path d="M361.1 292.4 L375.1 290.8 L380.0 289.6" fill="none" stroke="#f3c581" stroke-width="1.12" stroke-linejoin="round" stroke-linecap="round"/><path d="M363.5 320.3 L356.5 319.5 L350.3 321.8 L344.9 318.7" fill="none" stroke="#f3c581" stroke-width="1.12" stroke-linejoin="round" stroke-linecap="round"/><path d="M353.4 308.7 L356.5 314.1 L363.5 320.3" fill="none" stroke="#f3c581" stroke-width="1.12" stroke-linejoin="round" stroke-linecap="round"/><path d="M316.0 216.0 L317.6 221.7 L330.6 230.7 L335.5 263.2 L332.2 277.9 L323.6 287.7" fill="none" stroke="#5f6368" stroke-width="0.8" stroke-linejoin="round"/><path d="M324.2 287.8 L322.2 293.0 L324.7 297.1 L331.2 299.2 L339.3 295.4 L349.1 289.7 L363.7 285.7 L375.1 280.8 L380.0 277.5 L378.4 274.3 L376.0 266.9 L380.0 264.5 L394.7 263.7 L407.7 262.9" fill="none" stroke="#5f6368" stroke-width="0.8" stroke-linejoin="round"/><path d="M408.3 262.7 L412.9 253.8 L432.3 237.3 L478.8 236.7 L480.7 232.5 L490.4 231.5 L496.2 216.0" fill="none" stroke="#5f6368" stroke-width="0.8" stroke-linejoin="round"/><path d="M529.2 216.0 L530.1 225.7 L535.0 227.6 L535.9 233.4 L540.8 235.4" fill="none" stroke="#5f6368" stroke-width="0.8" stroke-linejoin="round"/><path d="M60.0 495.0 L71.6 496.4 L77.4 499.3 L81.3 507.0 L87.1 512.9 L89.4 516.7" fill="none" stroke="#5f6368" stroke-width="0.8" stroke-linejoin="round"/></g></svg>
<div style="position:absolute;left:0;top:0;width:1024px;height:516px;clip-path:inset(217px 484.5px 0 62px)">
<div style="position:absolute;top:234px;height:20px;line-height:20px;font-size:6.2px;color:#6e6e6a;white-space:nowrap;transform:translateY(0.60px) rotate(0.03deg);transform-origin:center center;left:-57.48px;width:300px;text-align:center;-webkit-text-stroke:0.25px #6e6e6a;text-shadow:0 0 1px #f4f3ec,0 0 1.5px #f4f3ec;letter-spacing:0.550px;">SOUTH</div>
<div style="position:absolute;top:241px;height:20px;line-height:20px;font-size:6.2px;color:#6e6e6a;white-space:nowrap;transform:translateY(0.10px) rotate(0.03deg);transform-origin:center center;left:-57.88px;width:300px;text-align:center;-webkit-text-stroke:0.25px #6e6e6a;text-shadow:0 0 1px #f4f3ec,0 0 1.5px #f4f3ec;letter-spacing:0.733px;">DAKOTA</div>
<div style="position:absolute;top:293px;height:20px;line-height:20px;font-size:6.2px;color:#6e6e6a;white-space:nowrap;transform:translateY(0.20px) rotate(0.03deg);transform-origin:center center;left:-45.95px;width:300px;text-align:center;-webkit-text-stroke:0.25px #6e6e6a;text-shadow:0 0 1px #f4f3ec,0 0 1.5px #f4f3ec;letter-spacing:0.490px;">NEBRASKA</div>
<div style="position:absolute;top:284px;height:20px;line-height:20px;font-size:6.2px;color:#6e6e6a;white-space:nowrap;transform:translateY(0.10px) rotate(0.03deg);transform-origin:center center;left:33.85px;width:300px;text-align:center;-webkit-text-stroke:0.25px #6e6e6a;text-shadow:0 0 1px #f4f3ec,0 0 1.5px #f4f3ec;letter-spacing:0.699px;">IOWA</div>
<div style="position:absolute;top:234px;height:20px;line-height:20px;font-size:6.2px;color:#6e6e6a;white-space:nowrap;transform:translateY(0.10px) rotate(0.03deg);transform-origin:center center;left:85.93px;width:300px;text-align:center;-webkit-text-stroke:0.25px #6e6e6a;text-shadow:0 0 1px #f4f3ec,0 0 1.5px #f4f3ec;letter-spacing:0.560px;">WISCONSIN</div>
<div style="position:absolute;top:251px;height:20px;line-height:20px;font-size:6.2px;color:#6e6e6a;white-space:nowrap;transform:translateY(0.10px) rotate(0.03deg);transform-origin:center center;left:152.24px;width:300px;text-align:center;-webkit-text-stroke:0.25px #6e6e6a;text-shadow:0 0 1px #f4f3ec,0 0 1.5px #f4f3ec;letter-spacing:0.686px;">MICHIGAN</div>
<div style="position:absolute;top:228px;height:20px;line-height:20px;font-size:6.2px;color:#6e6e6a;white-space:nowrap;transform:translateY(0.30px) rotate(0.03deg);transform-origin:center center;left:362.11px;width:300px;text-align:center;-webkit-text-stroke:0.25px #6e6e6a;text-shadow:0 0 1px #f4f3ec,0 0 1.5px #f4f3ec;letter-spacing:0.716px;">MAINE</div>
<div style="position:absolute;top:239px;height:20px;line-height:20px;font-size:6.2px;color:#6e6e6a;white-space:nowrap;transform:translateY(0.60px) rotate(0.03deg);transform-origin:center center;left:313.25px;width:300px;text-align:center;-webkit-text-stroke:0.25px #6e6e6a;text-shadow:0 0 1px #f4f3ec,0 0 1.5px #f4f3ec;letter-spacing:0.500px;">VERMONT</div>
<div style="position:absolute;top:254px;height:20px;line-height:20px;font-size:6.2px;color:#6e6e6a;white-space:nowrap;transform:translateY(0.60px) rotate(0.03deg);transform-origin:center center;left:328.11px;width:300px;text-align:center;-webkit-text-stroke:0.25px #6e6e6a;text-shadow:0 0 1px #f4f3ec,0 0 1.5px #f4f3ec;letter-spacing:-0.082px;">NEW</div>
<div style="position:absolute;top:261px;height:20px;line-height:20px;font-size:6.2px;color:#6e6e6a;white-space:nowrap;transform:translateY(0.60px) rotate(0.03deg);transform-origin:center center;left:328.32px;width:300px;text-align:center;-webkit-text-stroke:0.25px #6e6e6a;text-shadow:0 0 1px #f4f3ec,0 0 1.5px #f4f3ec;letter-spacing:0.642px;">HAMPSHIRE</div>
<div style="position:absolute;top:267px;height:20px;line-height:20px;font-size:6.2px;color:#6e6e6a;white-space:nowrap;transform:translateY(0.60px) rotate(0.03deg);transform-origin:center center;left:268.74px;width:300px;text-align:center;-webkit-text-stroke:0.25px #6e6e6a;text-shadow:0 0 1px #f4f3ec,0 0 1.5px #f4f3ec;letter-spacing:0.479px;">NEW YORK</div>
<div style="position:absolute;top:275px;height:20px;line-height:20px;font-size:6.2px;color:#6e6e6a;white-space:nowrap;transform:translateY(0.90px) rotate(0.03deg);transform-origin:center center;left:329.19px;width:300px;text-align:center;-webkit-text-stroke:0.25px #6e6e6a;text-shadow:0 0 1px #f4f3ec,0 0 1.5px #f4f3ec;letter-spacing:0.590px;">MASSACHUSETTS</div>
<div style="position:absolute;top:291px;height:20px;line-height:20px;font-size:6.2px;color:#6e6e6a;white-space:nowrap;transform:translateY(0.40px) rotate(0.03deg);transform-origin:center center;left:312.07px;width:300px;text-align:center;-webkit-text-stroke:0.25px #6e6e6a;text-shadow:0 0 1px #f4f3ec,0 0 1.5px #f4f3ec;letter-spacing:0.435px;">CT</div>
<div style="position:absolute;top:293px;height:20px;line-height:20px;font-size:6.2px;color:#6e6e6a;white-space:nowrap;transform:translateY(0.40px) rotate(0.03deg);transform-origin:center center;left:333.80px;width:300px;text-align:center;-webkit-text-stroke:0.25px #6e6e6a;text-shadow:0 0 1px #f4f3ec,0 0 1.5px #f4f3ec;letter-spacing:-0.400px;">RI</div>
<div style="position:absolute;top:304px;height:20px;line-height:20px;font-size:6.2px;color:#6e6e6a;white-space:nowrap;transform:translateY(0.60px) rotate(0.03deg);transform-origin:center center;left:246.26px;width:300px;text-align:center;-webkit-text-stroke:0.25px #6e6e6a;text-shadow:0 0 1px #f4f3ec,0 0 1.5px #f4f3ec;letter-spacing:0.724px;">PENNSYLVANIA</div>
<div style="position:absolute;top:345px;height:20px;line-height:20px;font-size:6.2px;color:#6e6e6a;white-space:nowrap;transform:translateY(0.60px) rotate(0.03deg);transform-origin:center center;left:-32.30px;width:300px;text-align:center;-webkit-text-stroke:0.25px #6e6e6a;text-shadow:0 0 1px #f4f3ec,0 0 1.5px #f4f3ec;letter-spacing:0.709px;">KANSAS</div>
<div style="position:absolute;top:349px;height:20px;line-height:20px;font-size:6.2px;color:#6e6e6a;white-space:nowrap;transform:translateY(0.20px) rotate(0.03deg);transform-origin:center center;left:47.11px;width:300px;text-align:center;-webkit-text-stroke:0.25px #6e6e6a;text-shadow:0 0 1px #f4f3ec,0 0 1.5px #f4f3ec;letter-spacing:0.520px;">MISSOURI</div>
<div style="position:absolute;top:392px;height:20px;line-height:20px;font-size:6.2px;color:#6e6e6a;white-space:nowrap;transform:translateY(0.80px) rotate(0.03deg);transform-origin:center center;left:-17.52px;width:300px;text-align:center;-webkit-text-stroke:0.25px #6e6e6a;text-shadow:0 0 1px #f4f3ec,0 0 1.5px #f4f3ec;letter-spacing:0.651px;">OKLAHOMA</div>
<div style="position:absolute;top:315px;height:20px;line-height:20px;font-size:6.2px;color:#6e6e6a;white-space:nowrap;transform:translateY(0.90px) rotate(0.03deg);transform-origin:center center;left:87.32px;width:300px;text-align:center;-webkit-text-stroke:0.25px #6e6e6a;text-shadow:0 0 1px #f4f3ec,0 0 1.5px #f4f3ec;letter-spacing:0.643px;">ILLINOIS</div>
<div style="position:absolute;top:315px;height:20px;line-height:20px;font-size:6.2px;color:#6e6e6a;white-space:nowrap;transform:translateY(0.90px) rotate(0.03deg);transform-origin:center center;left:132.61px;width:300px;text-align:center;-webkit-text-stroke:0.25px #6e6e6a;text-shadow:0 0 1px #f4f3ec,0 0 1.5px #f4f3ec;letter-spacing:0.725px;">INDIANA</div>
<div style="position:absolute;top:314px;height:20px;line-height:20px;font-size:6.2px;color:#6e6e6a;white-space:nowrap;transform:translateY(0.30px) rotate(0.03deg);transform-origin:center center;left:177.76px;width:300px;text-align:center;-webkit-text-stroke:0.25px #6e6e6a;text-shadow:0 0 1px #f4f3ec,0 0 1.5px #f4f3ec;letter-spacing:0.518px;">OHIO</div>
<div style="position:absolute;top:342px;height:20px;line-height:20px;font-size:6.2px;color:#6e6e6a;white-space:nowrap;transform:translateY(0.40px) rotate(0.03deg);transform-origin:center center;left:201.68px;width:300px;text-align:center;-webkit-text-stroke:0.25px #6e6e6a;text-shadow:0 0 1px #f4f3ec,0 0 1.5px #f4f3ec;letter-spacing:0.363px;">WEST</div>
<div style="position:absolute;top:348px;height:20px;line-height:20px;font-size:6.2px;color:#6e6e6a;white-space:nowrap;transform:translateY(0.60px) rotate(0.03deg);transform-origin:center center;left:201.80px;width:300px;text-align:center;-webkit-text-stroke:0.25px #6e6e6a;text-shadow:0 0 1px #f4f3ec,0 0 1.5px #f4f3ec;letter-spacing:0.598px;">VIRGINIA</div>
<div style="position:absolute;top:364px;height:20px;line-height:20px;font-size:6.2px;color:#6e6e6a;white-space:nowrap;transform:translateY(0.30px) rotate(0.03deg);transform-origin:center center;left:147.73px;width:300px;text-align:center;-webkit-text-stroke:0.25px #6e6e6a;text-shadow:0 0 1px #f4f3ec,0 0 1.5px #f4f3ec;letter-spacing:0.463px;">KENTUCKY</div>
<div style="position:absolute;top:392px;height:20px;line-height:20px;font-size:6.2px;color:#6e6e6a;white-space:nowrap;transform:translateY(0.80px) rotate(0.03deg);transform-origin:center center;left:124.93px;width:300px;text-align:center;-webkit-text-stroke:0.25px #6e6e6a;text-shadow:0 0 1px #f4f3ec,0 0 1.5px #f4f3ec;letter-spacing:0.368px;">TENNESSEE</div>
<div style="position:absolute;top:364px;height:20px;line-height:20px;font-size:6.2px;color:#6e6e6a;white-space:nowrap;transform:translateY(0.30px) rotate(0.03deg);transform-origin:center center;left:231.64px;width:300px;text-align:center;-webkit-text-stroke:0.25px #6e6e6a;text-shadow:0 0 1px #f4f3ec,0 0 1.5px #f4f3ec;letter-spacing:0.583px;">VIRGINIA</div>
<div style="position:absolute;top:391px;height:20px;line-height:20px;font-size:6.2px;color:#6e6e6a;white-space:nowrap;transform:translateY(0.20px) rotate(0.03deg);transform-origin:center center;left:228.86px;width:300px;text-align:center;-webkit-text-stroke:0.25px #6e6e6a;text-shadow:0 0 1px #f4f3ec,0 0 1.5px #f4f3ec;letter-spacing:0.517px;">NORTH</div>
<div style="position:absolute;top:397px;height:20px;line-height:20px;font-size:6.2px;color:#6e6e6a;white-space:nowrap;transform:translateY(0.30px) rotate(0.03deg);transform-origin:center center;left:228.94px;width:300px;text-align:center;-webkit-text-stroke:0.25px #6e6e6a;text-shadow:0 0 1px #f4f3ec,0 0 1.5px #f4f3ec;letter-spacing:0.572px;">CAROLINA</div>
<div style="position:absolute;top:409px;height:20px;line-height:20px;font-size:6.2px;color:#6e6e6a;white-space:nowrap;transform:translateY(0.60px) rotate(0.03deg);transform-origin:center center;left:48.60px;width:300px;text-align:center;-webkit-text-stroke:0.25px #6e6e6a;text-shadow:0 0 1px #f4f3ec,0 0 1.5px #f4f3ec;letter-spacing:0.504px;">ARKANSAS</div>
<div style="position:absolute;top:460px;height:20px;line-height:20px;font-size:6.2px;color:#6e6e6a;white-space:nowrap;transform:translateY(0.50px) rotate(0.03deg);transform-origin:center center;left:-41.72px;width:300px;text-align:center;-webkit-text-stroke:0.25px #6e6e6a;text-shadow:0 0 1px #f4f3ec,0 0 1.5px #f4f3ec;letter-spacing:0.368px;">TEXAS</div>
<div style="position:absolute;top:478px;height:20px;line-height:20px;font-size:6.2px;color:#6e6e6a;white-space:nowrap;transform:translateY(0.30px) rotate(0.03deg);transform-origin:center center;left:57.66px;width:300px;text-align:center;-webkit-text-stroke:0.25px #6e6e6a;text-shadow:0 0 1px #f4f3ec,0 0 1.5px #f4f3ec;letter-spacing:0.515px;">LOUISIANA</div>
<div style="position:absolute;top:428px;height:20px;line-height:20px;font-size:6.2px;color:#6e6e6a;white-space:nowrap;transform:translateY(0.90px) rotate(0.03deg);transform-origin:center center;left:85.48px;width:300px;text-align:center;-webkit-text-stroke:0.25px #6e6e6a;text-shadow:0 0 1px #f4f3ec,0 0 1.5px #f4f3ec;letter-spacing:0.553px;">MISSISSIPPI</div>
<div style="position:absolute;top:438px;height:20px;line-height:20px;font-size:6.2px;color:#6e6e6a;white-space:nowrap;transform:translateY(0.20px) rotate(0.03deg);transform-origin:center center;left:125.31px;width:300px;text-align:center;-webkit-text-stroke:0.25px #6e6e6a;text-shadow:0 0 1px #f4f3ec,0 0 1.5px #f4f3ec;letter-spacing:0.818px;">ALABAMA</div>
<div style="position:absolute;top:443px;height:20px;line-height:20px;font-size:6.2px;color:#6e6e6a;white-space:nowrap;transform:translateY(0.00px) rotate(0.03deg);transform-origin:center center;left:170.87px;width:300px;text-align:center;-webkit-text-stroke:0.25px #6e6e6a;text-shadow:0 0 1px #f4f3ec,0 0 1.5px #f4f3ec;letter-spacing:0.344px;">GEORGIA</div>
<div style="position:absolute;top:419px;height:20px;line-height:20px;font-size:6.2px;color:#6e6e6a;white-space:nowrap;transform:translateY(0.20px) rotate(0.03deg);transform-origin:center center;left:208.69px;width:300px;text-align:center;-webkit-text-stroke:0.25px #6e6e6a;text-shadow:0 0 1px #f4f3ec,0 0 1.5px #f4f3ec;letter-spacing:0.375px;">SOUTH</div>
<div style="position:absolute;top:426px;height:20px;line-height:20px;font-size:6.2px;color:#6e6e6a;white-space:nowrap;transform:translateY(0.00px) rotate(0.03deg);transform-origin:center center;left:208.52px;width:300px;text-align:center;-webkit-text-stroke:0.25px #6e6e6a;text-shadow:0 0 1px #f4f3ec,0 0 1.5px #f4f3ec;letter-spacing:0.543px;">CAROLINA</div>
<div style="position:absolute;top:324px;height:20px;line-height:20px;font-size:6.2px;color:#6e6e6a;white-space:nowrap;transform:translateY(0.00px) rotate(0.03deg);transform-origin:center center;left:288.61px;width:300px;text-align:center;-webkit-text-stroke:0.25px #6e6e6a;text-shadow:0 0 1px #f4f3ec,0 0 1.5px #f4f3ec;letter-spacing:1.022px;">NJ</div>
<div style="position:absolute;top:327px;height:20px;line-height:20px;font-size:6.2px;color:#6e6e6a;white-space:nowrap;transform:translateY(0.60px) rotate(0.03deg);transform-origin:center center;left:257.98px;width:300px;text-align:center;-webkit-text-stroke:0.25px #6e6e6a;text-shadow:0 0 1px #f4f3ec,0 0 1.5px #f4f3ec;letter-spacing:-0.049px;">MARYLAND</div>
<div style="position:absolute;top:222px;height:20px;line-height:20px;font-size:7.2px;color:#2e2e2e;white-space:nowrap;transform:translateY(0.80px) rotate(0.03deg);transform-origin:center center;left:36.59px;width:300px;text-align:center;text-shadow:0 0 1px #fff,0 0 1px #fff,0 0 2px #fff;letter-spacing:-0.022px;">Minneapolis</div>
<svg style="left:184.7px;top:236.1px" width="4.4" height="4.4" viewBox="-2.2 -2.2 4.4 4.4"><circle r="1.5" fill="#fff" stroke="#333" stroke-width="0.7"/></svg>
<div style="position:absolute;top:280px;height:20px;line-height:20px;font-size:7.2px;color:#2e2e2e;white-space:nowrap;transform:translateY(0.30px) rotate(0.03deg);transform-origin:center center;left:112.27px;width:300px;text-align:center;text-shadow:0 0 1px #fff,0 0 1px #fff,0 0 2px #fff;letter-spacing:-0.270px;">Chicago</div>
<svg style="left:259.8px;top:293.2px" width="4.4" height="4.4" viewBox="-2.2 -2.2 4.4 4.4"><circle r="1.5" fill="#fff" stroke="#333" stroke-width="0.7"/></svg>
<div style="position:absolute;top:247px;height:20px;line-height:20px;font-size:7.2px;color:#2e2e2e;white-space:nowrap;transform:translateY(0.80px) rotate(0.03deg);transform-origin:center center;left:208.52px;width:300px;text-align:center;text-shadow:0 0 1px #fff,0 0 1px #fff,0 0 2px #fff;letter-spacing:0.031px;">Toronto</div>
<svg style="left:370.8px;top:260.7px" width="4.4" height="4.4" viewBox="-2.2 -2.2 4.4 4.4"><circle r="1.5" fill="#fff" stroke="#333" stroke-width="0.7"/></svg>
<div style="position:absolute;top:272px;height:20px;line-height:20px;font-size:7.2px;color:#2e2e2e;white-space:nowrap;transform:translateY(0.10px) rotate(0.03deg);transform-origin:center center;left:174.02px;width:300px;text-align:center;text-shadow:0 0 1px #fff,0 0 1px #fff,0 0 2px #fff;letter-spacing:-0.168px;">Detroit</div>
<svg style="left:321.9px;top:285.1px" width="4.4" height="4.4" viewBox="-2.2 -2.2 4.4 4.4"><circle r="1.5" fill="#fff" stroke="#333" stroke-width="0.7"/></svg>
<div style="position:absolute;top:214px;height:20px;line-height:20px;font-size:7.2px;color:#2e2e2e;white-space:nowrap;transform:translateY(0.00px) rotate(0.03deg);transform-origin:center center;left:272.86px;width:300px;text-align:center;text-shadow:0 0 1px #fff,0 0 1px #fff,0 0 2px #fff;letter-spacing:-0.182px;">Ottawa</div>
<svg style="left:420.4px;top:227.4px" width="4.4" height="4.4" viewBox="-2.2 -2.2 4.4 4.4"><circle r="1.5" fill="#333" stroke="#333" stroke-width="0.7"/></svg>
<div style="position:absolute;top:213px;height:20px;line-height:20px;font-size:7.2px;color:#2e2e2e;white-space:nowrap;transform:translateY(0.10px) rotate(0.03deg);transform-origin:center center;left:301.43px;width:300px;text-align:center;text-shadow:0 0 1px #fff,0 0 1px #fff,0 0 2px #fff;letter-spacing:-0.145px;">Montreal</div>
<svg style="left:449.1px;top:225.8px" width="4.4" height="4.4" viewBox="-2.2 -2.2 4.4 4.4"><circle r="1.5" fill="#fff" stroke="#333" stroke-width="0.7"/></svg>
<div style="position:absolute;top:300px;height:20px;line-height:20px;font-size:7.2px;color:#2e2e2e;white-space:nowrap;transform:translateY(0.80px) rotate(0.03deg);transform-origin:center center;left:295.27px;width:300px;text-align:center;text-shadow:0 0 1px #fff,0 0 1px #fff,0 0 2px #fff;letter-spacing:-0.160px;">New York</div>
<svg style="left:443.3px;top:314.3px" width="4.4" height="4.4" viewBox="-2.2 -2.2 4.4 4.4"><circle r="1.5" fill="#fff" stroke="#333" stroke-width="0.7"/></svg>
<div style="position:absolute;top:329px;height:20px;line-height:20px;font-size:7.2px;color:#2e2e2e;white-space:nowrap;transform:translateY(0.20px) rotate(0.03deg);transform-origin:center center;left:18.74px;width:300px;text-align:center;text-shadow:0 0 1px #fff,0 0 1px #fff,0 0 2px #fff;letter-spacing:-0.212px;">Kansas City</div>
<svg style="left:166.7px;top:342.8px" width="4.4" height="4.4" viewBox="-2.2 -2.2 4.4 4.4"><circle r="1.5" fill="#fff" stroke="#333" stroke-width="0.7"/></svg>
<div style="position:absolute;top:329px;height:20px;line-height:20px;font-size:7.2px;color:#2e2e2e;white-space:nowrap;transform:translateY(0.50px) rotate(0.03deg);transform-origin:center center;left:131.98px;width:300px;text-align:center;text-shadow:0 0 1px #fff,0 0 1px #fff,0 0 2px #fff;letter-spacing:-0.039px;">Indianapolis</div>
<svg style="left:279.8px;top:330.8px" width="4.4" height="4.4" viewBox="-2.2 -2.2 4.4 4.4"><circle r="1.5" fill="#fff" stroke="#333" stroke-width="0.7"/></svg>
<div style="position:absolute;top:379px;height:20px;line-height:20px;font-size:7.2px;color:#2e2e2e;white-space:nowrap;transform:translateY(0.30px) rotate(0.03deg);transform-origin:center center;left:123.68px;width:300px;text-align:center;text-shadow:0 0 1px #fff,0 0 1px #fff,0 0 2px #fff;letter-spacing:-0.139px;">Nashville</div>
<svg style="left:272.0px;top:392.4px" width="4.4" height="4.4" viewBox="-2.2 -2.2 4.4 4.4"><circle r="1.5" fill="#fff" stroke="#333" stroke-width="0.7"/></svg>
<div style="position:absolute;top:405px;height:20px;line-height:20px;font-size:7.2px;color:#2e2e2e;white-space:nowrap;transform:translateY(0.10px) rotate(0.03deg);transform-origin:center center;left:204.05px;width:300px;text-align:center;text-shadow:0 0 1px #fff,0 0 1px #fff,0 0 2px #fff;letter-spacing:0.098px;">Charlotte</div>
<svg style="left:351.1px;top:407.8px" width="4.4" height="4.4" viewBox="-2.2 -2.2 4.4 4.4"><circle r="1.5" fill="#fff" stroke="#333" stroke-width="0.7"/></svg>
<div style="position:absolute;top:314px;height:20px;line-height:20px;font-size:7.2px;color:#2e2e2e;white-space:nowrap;transform:translateY(0.30px) rotate(0.03deg);transform-origin:center center;left:279.83px;width:300px;text-align:center;text-shadow:0 0 1px #fff,0 0 1px #fff,0 0 2px #fff;letter-spacing:-0.130px;">Philadelphia</div>
<svg style="left:427.8px;top:327.8px" width="4.4" height="4.4" viewBox="-2.2 -2.2 4.4 4.4"><circle r="1.5" fill="#fff" stroke="#333" stroke-width="0.7"/></svg>
<div style="position:absolute;top:434px;height:20px;line-height:20px;font-size:7.2px;color:#2e2e2e;white-space:nowrap;transform:translateY(0.30px) rotate(0.03deg);transform-origin:center center;left:-11.32px;width:300px;text-align:center;text-shadow:0 0 1px #fff,0 0 1px #fff,0 0 2px #fff;letter-spacing:-0.342px;">Dallas</div>
<svg style="left:136.8px;top:447.8px" width="4.4" height="4.4" viewBox="-2.2 -2.2 4.4 4.4"><circle r="1.5" fill="#fff" stroke="#333" stroke-width="0.7"/></svg>
<div style="position:absolute;top:474px;height:20px;line-height:20px;font-size:7.2px;color:#2e2e2e;white-space:nowrap;transform:translateY(0.10px) rotate(0.03deg);transform-origin:center center;left:-23.76px;width:300px;text-align:center;text-shadow:0 0 1px #fff,0 0 1px #fff,0 0 2px #fff;letter-spacing:-0.122px;">Austin</div>
<svg style="left:124.0px;top:487.0px" width="4.4" height="4.4" viewBox="-2.2 -2.2 4.4 4.4"><circle r="1.5" fill="#fff" stroke="#333" stroke-width="0.7"/></svg>
<div style="position:absolute;top:481px;height:20px;line-height:20px;font-size:7.2px;color:#2e2e2e;white-space:nowrap;transform:translateY(0.50px) rotate(0.03deg);transform-origin:center center;left:8.08px;width:300px;text-align:center;text-shadow:0 0 1px #fff,0 0 1px #fff,0 0 2px #fff;letter-spacing:-0.036px;">Houston</div>
<svg style="left:156.0px;top:494.6px" width="4.4" height="4.4" viewBox="-2.2 -2.2 4.4 4.4"><circle r="1.5" fill="#fff" stroke="#333" stroke-width="0.7"/></svg>
<div style="position:absolute;top:486px;height:20px;line-height:20px;font-size:7.2px;color:#2e2e2e;white-space:nowrap;transform:translateY(0.70px) rotate(0.03deg);transform-origin:center center;left:-33.84px;width:300px;text-align:center;text-shadow:0 0 1px #fff,0 0 1px #fff,0 0 2px #fff;letter-spacing:-0.084px;">San Antonio</div>
<svg style="left:114.0px;top:500.0px" width="4.4" height="4.4" viewBox="-2.2 -2.2 4.4 4.4"><circle r="1.5" fill="#fff" stroke="#333" stroke-width="0.7"/></svg>
<div style="position:absolute;top:418px;height:20px;line-height:20px;font-size:7.2px;color:#2e2e2e;white-space:nowrap;transform:translateY(0.90px) rotate(0.03deg);transform-origin:center center;left:155.76px;width:300px;text-align:center;text-shadow:0 0 1px #fff,0 0 1px #fff,0 0 2px #fff;letter-spacing:-0.186px;">Atlanta</div>
<svg style="left:303.6px;top:432.2px" width="4.4" height="4.4" viewBox="-2.2 -2.2 4.4 4.4"><circle r="1.5" fill="#fff" stroke="#333" stroke-width="0.7"/></svg>
<div style="position:absolute;top:473px;height:20px;line-height:20px;font-size:7.2px;color:#2e2e2e;white-space:nowrap;transform:translateY(0.10px) rotate(0.03deg);transform-origin:center center;left:192.78px;width:300px;text-align:center;text-shadow:0 0 1px #fff,0 0 1px #fff,0 0 2px #fff;letter-spacing:-0.038px;">Jacksonville</div>
<svg style="left:340.4px;top:486.1px" width="4.4" height="4.4" viewBox="-2.2 -2.2 4.4 4.4"><circle r="1.5" fill="#fff" stroke="#333" stroke-width="0.7"/></svg>
<div style="position:absolute;top:500px;height:20px;line-height:20px;font-size:7.2px;color:#2e2e2e;white-space:nowrap;transform:translateY(0.80px) rotate(0.03deg);transform-origin:center center;left:196.28px;width:300px;text-align:center;text-shadow:0 0 1px #fff,0 0 1px #fff,0 0 2px #fff;letter-spacing:-0.236px;">Orlando</div>
<div style="position:absolute;top:490px;height:20px;line-height:20px;font-size:7.2px;color:#2e2e2e;white-space:nowrap;transform:translateY(0.00px) rotate(0.03deg);transform-origin:center center;left:79.25px;width:300px;text-align:center;text-shadow:0 0 1px #fff,0 0 1px #fff,0 0 2px #fff;letter-spacing:-0.502px;">New Orleans</div>
<svg style="left:227.1px;top:491.7px" width="4.4" height="4.4" viewBox="-2.2 -2.2 4.4 4.4"><circle r="1.5" fill="#fff" stroke="#333" stroke-width="0.7"/></svg>
<div style="position:absolute;top:345px;height:20px;line-height:20px;font-size:7.2px;color:#2e2e2e;white-space:nowrap;transform:translateY(0.00px) rotate(0.03deg);transform-origin:center center;left:256.12px;width:300px;text-align:center;text-shadow:0 0 1px #fff,0 0 1px #fff,0 0 2px #fff;letter-spacing:-0.351px;">Washington</div>
<div style="position:absolute;top:324px;height:20px;line-height:20px;font-size:10.3px;color:#333;white-space:nowrap;transform:translateY(0.20px) rotate(0.03deg);transform-origin:right center;right:915.05px;font-weight:bold;text-shadow:0 0 1px #fff,0 0 2px #fff;letter-spacing:-0.252px;">United States</div>
<div style="position:absolute;left:67.70px;top:224.10px;width:54.30px;height:16.80px;background:#fff;border-radius:1px;box-shadow:0 0.5px 2px rgba(0,0,0,0.3);"></div>
<svg style="left:88px;top:223px" width="3" height="19"><rect x="1.30" y="1.10" width="0.60" height="16.80" rx="0.00" fill="#e6e6e6"/></svg>
<div style="position:absolute;top:222px;height:20px;line-height:20px;font-size:6.3px;color:#111;white-space:nowrap;transform:translateY(0.60px) rotate(0.03deg);transform-origin:center center;left:-71.50px;width:300px;text-align:center;font-weight:bold;">Map</div>
<div style="position:absolute;top:222px;height:20px;line-height:20px;font-size:6.3px;color:#555;white-space:nowrap;transform:translateY(0.60px) rotate(0.03deg);transform-origin:center center;left:-44.00px;width:300px;text-align:center;">Satellite</div>
<div style="position:absolute;left:516.60px;top:460.60px;width:17.00px;height:17.00px;background:#fff;border-radius:1px;box-shadow:0 0.5px 2px rgba(0,0,0,0.3);"></div>
<svg style="left:521.5px;top:462.5px" width="7" height="13" viewBox="0 0 7 13"><circle cx="3.5" cy="2" r="1.8" fill="#f0a030"/><path d="M1 4.4 H6 L6.3 8.5 H5.2 L4.8 12.5 H2.2 L1.8 8.5 H0.7Z" fill="#f0a030"/></svg>
<div style="position:absolute;left:516.60px;top:483.20px;width:17.00px;height:40.00px;background:#fff;border-radius:1px;box-shadow:0 0.5px 2px rgba(0,0,0,0.3);"></div>
<svg style="left:518px;top:498px" width="14" height="3"><rect x="1.60" y="1.20" width="11.00" height="0.60" rx="0.00" fill="#e6e6e6"/></svg>
<svg style="left:521.6px;top:487.7px" width="7" height="7" viewBox="0 0 7 7"><path d="M0 3.5H7M3.5 0V7" stroke="#666" stroke-width="1.3"/></svg>
<svg style="left:521.6px;top:504px" width="7" height="7" viewBox="0 0 7 7"><path d="M0 3.5H7" stroke="#666" stroke-width="1.3"/></svg>
<svg style="left:373.7px;top:332.1px" width="26" height="30" viewBox="-13 -13 26 30"><path d="M-3 10 L0 15.5 L3 10Z" fill="#fff"/><ellipse cx="0.3" cy="1.2" rx="11.4" ry="11.2" fill="#000" opacity="0.12"/><circle r="11.3" fill="#fff"/><circle r="9.95" fill="#8cc622"/><path d="M0 0 L-2.74 -9.56 A9.95 9.95 0 0 1 8.44 -5.27Z" fill="#c3e2fa"/><path d="M0 0 L8.44 -5.27 A9.95 9.95 0 0 1 9.95 -0.00Z" fill="#5fb2f2"/></svg>
<div style="position:absolute;left:397.20px;top:339.30px;width:31.70px;height:10.50px;background:#fff;box-shadow:0 0.5px 1.5px rgba(0,0,0,0.35);"></div>
<div style="position:absolute;top:334px;height:20px;line-height:20px;font-size:6.3px;color:#1f2633;white-space:nowrap;transform:translateY(0.80px) rotate(0.03deg);transform-origin:left center;left:399.20px;-webkit-text-stroke:0.2px #1f2633;letter-spacing:-0.046px;">E. Region</div>
</div>
<svg style="left:542px;top:193px" width="481" height="181"><rect x="1.50" y="2.00" width="478.00" height="177.00" rx="1.50" fill="#fbfbfb" stroke="#cfd3cf" stroke-width="1.0"/></svg>
<div style="position:absolute;left:544.00px;top:195.50px;width:477.00px;height:22.30px;background:#fff;border-bottom:1px solid #dedede;"></div>
<div style="position:absolute;top:191px;height:20px;line-height:20px;font-size:9.2px;color:#3c4654;white-space:nowrap;transform:translateY(0.60px) rotate(0.03deg);transform-origin:left center;left:548.50px;">Production</div>
<div style="position:absolute;top:200px;height:20px;line-height:20px;font-size:6.2px;color:#7a8596;white-space:nowrap;transform:translateY(0.90px) rotate(0.03deg);transform-origin:left center;left:548.50px;letter-spacing:0.099px;">Group: Production</div>
<svg style="left:1008.3px;top:202.2px" width="7.6" height="7.4" viewBox="0 0 7.6 7.4"><rect x="0.4" y="0.4" width="6.8" height="6.6" fill="#fff" stroke="#b4c2e2" stroke-width="0.8"/><path d="M3.8 0.8H6.8V3.7Z M0.8 3.7V6.6H3.8Z" fill="#8b98b8"/></svg>
<svg style="left:526.1px;top:202.2px" width="7.6" height="7.4" viewBox="0 0 7.6 7.4"><rect x="0.4" y="0.4" width="6.8" height="6.6" fill="#fff" stroke="#b4c2e2" stroke-width="0.8"/><path d="M3.8 0.8H6.8V3.7Z M0.8 3.7V6.6H3.8Z" fill="#8b98b8"/></svg>
<svg style="left:546px;top:221px" width="236" height="73"><rect x="1.90" y="1.90" width="232.50" height="69.30" rx="1.50" fill="#f1f1f1" stroke="#d9d9d9" stroke-width="1.0"/></svg>
<svg style="left:549px;top:224px" width="230" height="26"><rect x="1.50" y="1.50" width="226.60" height="23.40" rx="1.50" fill="#bfe1fb"/></svg>
<div style="position:absolute;top:227px;height:20px;line-height:20px;font-size:9.3px;color:#3a4654;white-space:nowrap;transform:translateY(0.60px) rotate(0.03deg);transform-origin:center center;left:513.80px;width:300px;text-align:center;">Plant 1</div>
<svg style="left:763.7px;top:231.1px;opacity:0.75" width="8.4" height="8.4" viewBox="0 0 8 8"><rect x="0.4" y="0.4" width="7.2" height="7.2" fill="none" stroke="#5d6f8c" stroke-width="0.7"/><path d="M1.9 5 L4 2.9 L6.1 5Z" fill="#5d6f8c"/></svg>
<svg style="left:549px;top:249px" width="47" height="41"><rect x="1.60" y="1.30" width="43.80" height="38.40" rx="1.50" fill="#8cc622"/></svg>
<div style="position:absolute;top:253px;height:20px;line-height:20px;font-size:8px;color:#2f3d0d;white-space:nowrap;transform:translateY(0.70px) rotate(0.03deg);transform-origin:center center;left:422.08px;width:300px;text-align:center;letter-spacing:-0.848px;">OEE</div>
<div style="position:absolute;top:266px;height:20px;line-height:20px;font-size:8px;color:#2f3d0d;white-space:nowrap;transform:translateY(0.90px) rotate(0.03deg);transform-origin:center center;left:422.43px;width:300px;text-align:center;letter-spacing:-0.136px;">95.67%</div>
<svg style="left:595px;top:249px" width="46" height="41"><rect x="1.20" y="1.30" width="43.80" height="38.40" rx="1.50" fill="#8cc622"/></svg>
<div style="position:absolute;top:253px;height:20px;line-height:20px;font-size:8px;color:#2f3d0d;white-space:nowrap;transform:translateY(0.70px) rotate(0.03deg);transform-origin:center center;left:468.17px;width:300px;text-align:center;letter-spacing:0.147px;">Downtime</div>
<div style="position:absolute;top:266px;height:20px;line-height:20px;font-size:8px;color:#2f3d0d;white-space:nowrap;transform:translateY(0.90px) rotate(0.03deg);transform-origin:center center;left:468.03px;width:300px;text-align:center;letter-spacing:-0.142px;">4.58%</div>
<svg style="left:640px;top:249px" width="47" height="41"><rect x="1.80" y="1.30" width="43.80" height="38.40" rx="1.50" fill="#8cc622"/></svg>
<div style="position:absolute;top:253px;height:20px;line-height:20px;font-size:8px;color:#2f3d0d;white-space:nowrap;transform:translateY(0.70px) rotate(0.03deg);transform-origin:center center;left:513.64px;width:300px;text-align:center;letter-spacing:-0.116px;">Quality</div>
<div style="position:absolute;top:266px;height:20px;line-height:20px;font-size:8px;color:#2f3d0d;white-space:nowrap;transform:translateY(0.90px) rotate(0.03deg);transform-origin:center center;left:513.63px;width:300px;text-align:center;letter-spacing:-0.136px;">89.58%</div>
<svg style="left:686px;top:249px" width="47" height="41"><rect x="1.40" y="1.30" width="43.80" height="38.40" rx="1.50" fill="#bfe1fb"/></svg>
<div style="position:absolute;top:253px;height:20px;line-height:20px;font-size:8px;color:#3f4a59;white-space:nowrap;transform:translateY(0.70px) rotate(0.03deg);transform-origin:center center;left:559.16px;width:300px;text-align:center;letter-spacing:-0.273px;">Yield</div>
<div style="position:absolute;top:266px;height:20px;line-height:20px;font-size:8px;color:#3f4a59;white-space:nowrap;transform:translateY(0.90px) rotate(0.03deg);transform-origin:center center;left:559.23px;width:300px;text-align:center;letter-spacing:-0.136px;">86.91%</div>
<svg style="left:732px;top:249px" width="46" height="41"><rect x="1.00" y="1.30" width="43.80" height="38.40" rx="1.50" fill="#8cc622"/></svg>
<div style="position:absolute;top:253px;height:20px;line-height:20px;font-size:8px;color:#2f3d0d;white-space:nowrap;transform:translateY(0.70px) rotate(0.03deg);transform-origin:center center;left:605.00px;width:300px;text-align:center;letter-spacing:0.192px;">Utilization</div>
<div style="position:absolute;top:266px;height:20px;line-height:20px;font-size:8px;color:#2f3d0d;white-space:nowrap;transform:translateY(0.90px) rotate(0.03deg);transform-origin:center center;left:604.83px;width:300px;text-align:center;letter-spacing:-0.136px;">73.51%</div>
<svg style="left:782px;top:221px" width="236" height="73"><rect x="1.80" y="1.90" width="232.50" height="69.30" rx="1.50" fill="#f1f1f1" stroke="#d9d9d9" stroke-width="1.0"/></svg>
<svg style="left:785px;top:224px" width="229" height="26"><rect x="1.40" y="1.50" width="226.60" height="23.40" rx="1.50" fill="#62b5f5"/></svg>
<div style="position:absolute;top:227px;height:20px;line-height:20px;font-size:9.3px;color:#2b3a4c;white-space:nowrap;transform:translateY(0.60px) rotate(0.03deg);transform-origin:center center;left:749.70px;width:300px;text-align:center;">Plant 2</div>
<svg style="left:999.5999999999999px;top:231.1px;opacity:0.75" width="8.4" height="8.4" viewBox="0 0 8 8"><rect x="0.4" y="0.4" width="7.2" height="7.2" fill="none" stroke="#5d6f8c" stroke-width="0.7"/><path d="M1.9 5 L4 2.9 L6.1 5Z" fill="#5d6f8c"/></svg>
<svg style="left:785px;top:249px" width="47" height="41"><rect x="1.50" y="1.30" width="43.80" height="38.40" rx="1.50" fill="#bfe1fb"/></svg>
<div style="position:absolute;top:253px;height:20px;line-height:20px;font-size:8px;color:#3f4a59;white-space:nowrap;transform:translateY(0.70px) rotate(0.03deg);transform-origin:center center;left:657.98px;width:300px;text-align:center;letter-spacing:-0.848px;">OEE</div>
<div style="position:absolute;top:266px;height:20px;line-height:20px;font-size:8px;color:#3f4a59;white-space:nowrap;transform:translateY(0.90px) rotate(0.03deg);transform-origin:center center;left:658.33px;width:300px;text-align:center;letter-spacing:-0.136px;">90.02%</div>
<svg style="left:831px;top:249px" width="46" height="41"><rect x="1.10" y="1.30" width="43.80" height="38.40" rx="1.50" fill="#8cc622"/></svg>
<div style="position:absolute;top:253px;height:20px;line-height:20px;font-size:8px;color:#2f3d0d;white-space:nowrap;transform:translateY(0.70px) rotate(0.03deg);transform-origin:center center;left:704.07px;width:300px;text-align:center;letter-spacing:0.147px;">Downtime</div>
<div style="position:absolute;top:266px;height:20px;line-height:20px;font-size:8px;color:#2f3d0d;white-space:nowrap;transform:translateY(0.90px) rotate(0.03deg);transform-origin:center center;left:703.86px;width:300px;text-align:center;letter-spacing:-0.289px;">5%</div>
<svg style="left:876px;top:249px" width="47" height="41"><rect x="1.70" y="1.30" width="43.80" height="38.40" rx="1.50" fill="#8cc622"/></svg>
<div style="position:absolute;top:253px;height:20px;line-height:20px;font-size:8px;color:#2f3d0d;white-space:nowrap;transform:translateY(0.70px) rotate(0.03deg);transform-origin:center center;left:749.54px;width:300px;text-align:center;letter-spacing:-0.116px;">Quality</div>
<div style="position:absolute;top:266px;height:20px;line-height:20px;font-size:8px;color:#2f3d0d;white-space:nowrap;transform:translateY(0.90px) rotate(0.03deg);transform-origin:center center;left:749.53px;width:300px;text-align:center;letter-spacing:-0.136px;">92.94%</div>
<svg style="left:922px;top:249px" width="47" height="41"><rect x="1.30" y="1.30" width="43.80" height="38.40" rx="1.50" fill="#62b5f5"/></svg>
<div style="position:absolute;top:253px;height:20px;line-height:20px;font-size:8px;color:#23364b;white-space:nowrap;transform:translateY(0.70px) rotate(0.03deg);transform-origin:center center;left:795.06px;width:300px;text-align:center;letter-spacing:-0.273px;">Yield</div>
<div style="position:absolute;top:266px;height:20px;line-height:20px;font-size:8px;color:#23364b;white-space:nowrap;transform:translateY(0.90px) rotate(0.03deg);transform-origin:center center;left:795.13px;width:300px;text-align:center;letter-spacing:-0.136px;">82.81%</div>
<svg style="left:967px;top:249px" width="47" height="41"><rect x="1.90" y="1.30" width="43.80" height="38.40" rx="1.50" fill="#8cc622"/></svg>
<div style="position:absolute;top:253px;height:20px;line-height:20px;font-size:8px;color:#2f3d0d;white-space:nowrap;transform:translateY(0.70px) rotate(0.03deg);transform-origin:center center;left:840.90px;width:300px;text-align:center;letter-spacing:0.192px;">Utilization</div>
<div style="position:absolute;top:266px;height:20px;line-height:20px;font-size:8px;color:#2f3d0d;white-space:nowrap;transform:translateY(0.90px) rotate(0.03deg);transform-origin:center center;left:840.73px;width:300px;text-align:center;letter-spacing:-0.136px;">73.38%</div>
<svg style="left:546px;top:295px" width="236" height="74"><rect x="1.90" y="2.40" width="232.50" height="69.30" rx="1.50" fill="#f1f1f1" stroke="#d9d9d9" stroke-width="1.0"/></svg>
<svg style="left:549px;top:299px" width="230" height="26"><rect x="1.50" y="1.00" width="226.60" height="23.40" rx="1.50" fill="#c4122e"/></svg>
<div style="position:absolute;top:302px;height:20px;line-height:20px;font-size:9.3px;color:#fff;white-space:nowrap;transform:translateY(0.10px) rotate(0.03deg);transform-origin:center center;left:513.80px;width:300px;text-align:center;">Plant 3</div>
<svg style="left:763.7px;top:305.59999999999997px;opacity:0.55" width="8.4" height="8.4" viewBox="0 0 8 8"><rect x="0.4" y="0.4" width="7.2" height="7.2" fill="none" stroke="#fff" stroke-width="0.7"/><path d="M1.9 5 L4 2.9 L6.1 5Z" fill="#fff"/></svg>
<svg style="left:549px;top:323px" width="47" height="42"><rect x="1.60" y="1.80" width="43.80" height="38.40" rx="1.50" fill="#8cc622"/></svg>
<div style="position:absolute;top:328px;height:20px;line-height:20px;font-size:8px;color:#2f3d0d;white-space:nowrap;transform:translateY(0.20px) rotate(0.03deg);transform-origin:center center;left:422.08px;width:300px;text-align:center;letter-spacing:-0.848px;">OEE</div>
<div style="position:absolute;top:341px;height:20px;line-height:20px;font-size:8px;color:#2f3d0d;white-space:nowrap;transform:translateY(0.40px) rotate(0.03deg);transform-origin:center center;left:422.43px;width:300px;text-align:center;letter-spacing:-0.136px;">95.25%</div>
<svg style="left:595px;top:323px" width="46" height="42"><rect x="1.20" y="1.80" width="43.80" height="38.40" rx="1.50" fill="#c4122e"/></svg>
<div style="position:absolute;top:328px;height:20px;line-height:20px;font-size:8px;color:#fff;white-space:nowrap;transform:translateY(0.20px) rotate(0.03deg);transform-origin:center center;left:468.17px;width:300px;text-align:center;letter-spacing:0.147px;">Downtime</div>
<div style="position:absolute;top:341px;height:20px;line-height:20px;font-size:8px;color:#fff;white-space:nowrap;transform:translateY(0.40px) rotate(0.03deg);transform-origin:center center;left:467.96px;width:300px;text-align:center;letter-spacing:-0.289px;">9%</div>
<svg style="left:640px;top:323px" width="47" height="42"><rect x="1.80" y="1.80" width="43.80" height="38.40" rx="1.50" fill="#8cc622"/></svg>
<div style="position:absolute;top:328px;height:20px;line-height:20px;font-size:8px;color:#2f3d0d;white-space:nowrap;transform:translateY(0.20px) rotate(0.03deg);transform-origin:center center;left:513.64px;width:300px;text-align:center;letter-spacing:-0.116px;">Quality</div>
<div style="position:absolute;top:341px;height:20px;line-height:20px;font-size:8px;color:#2f3d0d;white-space:nowrap;transform:translateY(0.40px) rotate(0.03deg);transform-origin:center center;left:513.63px;width:300px;text-align:center;letter-spacing:-0.136px;">90.02%</div>
<svg style="left:686px;top:323px" width="47" height="42"><rect x="1.40" y="1.80" width="43.80" height="38.40" rx="1.50" fill="#8cc622"/></svg>
<div style="position:absolute;top:328px;height:20px;line-height:20px;font-size:8px;color:#2f3d0d;white-space:nowrap;transform:translateY(0.20px) rotate(0.03deg);transform-origin:center center;left:559.16px;width:300px;text-align:center;letter-spacing:-0.273px;">Yield</div>
<div style="position:absolute;top:341px;height:20px;line-height:20px;font-size:8px;color:#2f3d0d;white-space:nowrap;transform:translateY(0.40px) rotate(0.03deg);transform-origin:center center;left:559.23px;width:300px;text-align:center;letter-spacing:-0.136px;">90.71%</div>
<svg style="left:732px;top:323px" width="46" height="42"><rect x="1.00" y="1.80" width="43.80" height="38.40" rx="1.50" fill="#8cc622"/></svg>
<div style="position:absolute;top:328px;height:20px;line-height:20px;font-size:8px;color:#2f3d0d;white-space:nowrap;transform:translateY(0.20px) rotate(0.03deg);transform-origin:center center;left:605.00px;width:300px;text-align:center;letter-spacing:0.192px;">Utilization</div>
<div style="position:absolute;top:341px;height:20px;line-height:20px;font-size:8px;color:#2f3d0d;white-space:nowrap;transform:translateY(0.40px) rotate(0.03deg);transform-origin:center center;left:604.83px;width:300px;text-align:center;letter-spacing:-0.136px;">78.46%</div>
<svg style="left:782px;top:295px" width="236" height="74"><rect x="1.80" y="2.40" width="232.50" height="69.30" rx="1.50" fill="#f1f1f1" stroke="#d9d9d9" stroke-width="1.0"/></svg>
<svg style="left:785px;top:299px" width="229" height="26"><rect x="1.40" y="1.00" width="226.60" height="23.40" rx="1.50" fill="#c4122e"/></svg>
<div style="position:absolute;top:302px;height:20px;line-height:20px;font-size:9.3px;color:#fff;white-space:nowrap;transform:translateY(0.10px) rotate(0.03deg);transform-origin:center center;left:749.70px;width:300px;text-align:center;">Plant 4</div>
<svg style="left:999.5999999999999px;top:305.59999999999997px;opacity:0.55" width="8.4" height="8.4" viewBox="0 0 8 8"><rect x="0.4" y="0.4" width="7.2" height="7.2" fill="none" stroke="#fff" stroke-width="0.7"/><path d="M1.9 5 L4 2.9 L6.1 5Z" fill="#fff"/></svg>
<svg style="left:785px;top:323px" width="47" height="42"><rect x="1.50" y="1.80" width="43.80" height="38.40" rx="1.50" fill="#62b5f5"/></svg>
<div style="position:absolute;top:328px;height:20px;line-height:20px;font-size:8px;color:#23364b;white-space:nowrap;transform:translateY(0.20px) rotate(0.03deg);transform-origin:center center;left:657.98px;width:300px;text-align:center;letter-spacing:-0.848px;">OEE</div>
<div style="position:absolute;top:341px;height:20px;line-height:20px;font-size:8px;color:#23364b;white-space:nowrap;transform:translateY(0.40px) rotate(0.03deg);transform-origin:center center;left:658.33px;width:300px;text-align:center;letter-spacing:-0.136px;">72.49%</div>
<svg style="left:831px;top:323px" width="46" height="42"><rect x="1.10" y="1.80" width="43.80" height="38.40" rx="1.50" fill="#c4122e"/></svg>
<div style="position:absolute;top:328px;height:20px;line-height:20px;font-size:8px;color:#fff;white-space:nowrap;transform:translateY(0.20px) rotate(0.03deg);transform-origin:center center;left:704.07px;width:300px;text-align:center;letter-spacing:0.147px;">Downtime</div>
<div style="position:absolute;top:341px;height:20px;line-height:20px;font-size:8px;color:#fff;white-space:nowrap;transform:translateY(0.40px) rotate(0.03deg);transform-origin:center center;left:703.93px;width:300px;text-align:center;letter-spacing:-0.142px;">9.45%</div>
<svg style="left:876px;top:323px" width="47" height="42"><rect x="1.70" y="1.80" width="43.80" height="38.40" rx="1.50" fill="#8cc622"/></svg>
<div style="position:absolute;top:328px;height:20px;line-height:20px;font-size:8px;color:#2f3d0d;white-space:nowrap;transform:translateY(0.20px) rotate(0.03deg);transform-origin:center center;left:749.54px;width:300px;text-align:center;letter-spacing:-0.116px;">Quality</div>
<div style="position:absolute;top:341px;height:20px;line-height:20px;font-size:8px;color:#2f3d0d;white-space:nowrap;transform:translateY(0.40px) rotate(0.03deg);transform-origin:center center;left:749.53px;width:300px;text-align:center;letter-spacing:-0.136px;">91.46%</div>
<svg style="left:922px;top:323px" width="47" height="42"><rect x="1.30" y="1.80" width="43.80" height="38.40" rx="1.50" fill="#8cc622"/></svg>
<div style="position:absolute;top:328px;height:20px;line-height:20px;font-size:8px;color:#2f3d0d;white-space:nowrap;transform:translateY(0.20px) rotate(0.03deg);transform-origin:center center;left:795.06px;width:300px;text-align:center;letter-spacing:-0.273px;">Yield</div>
<div style="position:absolute;top:341px;height:20px;line-height:20px;font-size:8px;color:#2f3d0d;white-space:nowrap;transform:translateY(0.40px) rotate(0.03deg);transform-origin:center center;left:795.13px;width:300px;text-align:center;letter-spacing:-0.136px;">91.69%</div>
<svg style="left:967px;top:323px" width="47" height="42"><rect x="1.90" y="1.80" width="43.80" height="38.40" rx="1.50" fill="#8cc622"/></svg>
<div style="position:absolute;top:328px;height:20px;line-height:20px;font-size:8px;color:#2f3d0d;white-space:nowrap;transform:translateY(0.20px) rotate(0.03deg);transform-origin:center center;left:840.90px;width:300px;text-align:center;letter-spacing:0.192px;">Utilization</div>
<div style="position:absolute;top:341px;height:20px;line-height:20px;font-size:8px;color:#2f3d0d;white-space:nowrap;transform:translateY(0.40px) rotate(0.03deg);transform-origin:center center;left:840.73px;width:300px;text-align:center;letter-spacing:-0.136px;">75.67%</div>
<svg style="left:542px;top:376px" width="481" height="148"><rect x="1.50" y="1.80" width="478.00" height="144.00" rx="1.50" fill="#f8f9fb" stroke="#cfd3cf" stroke-width="1.0"/></svg>
<div style="position:absolute;left:544.00px;top:378.30px;width:477.00px;height:22.80px;background:#fff;border-bottom:1px solid #e2e2e2;"></div>
<div style="position:absolute;top:374px;height:20px;line-height:20px;font-size:9.2px;color:#3c4654;white-space:nowrap;transform:translateY(0.60px) rotate(0.03deg);transform-origin:left center;left:548.50px;">Rates</div>
<div style="position:absolute;top:384px;height:20px;line-height:20px;font-size:6.2px;color:#7a8596;white-space:nowrap;transform:translateY(0.10px) rotate(0.03deg);transform-origin:left center;left:548.50px;letter-spacing:0.048px;">Fill vs Return Rates</div>
<svg style="left:1008.3px;top:384.9px" width="7.6" height="7.4" viewBox="0 0 7.6 7.4"><rect x="0.4" y="0.4" width="6.8" height="6.6" fill="#fff" stroke="#b4c2e2" stroke-width="0.8"/><path d="M3.8 0.8H6.8V3.7Z M0.8 3.7V6.6H3.8Z" fill="#8b98b8"/></svg>
<svg style="left:988px;top:384px" width="10.5" height="10" viewBox="0 0 10.5 10"><rect x="1" y="1" width="6.6" height="6.6" fill="none" stroke="#7a89a8" stroke-width="0.8"/><rect x="0.2" y="0.2" width="1.7" height="1.7" fill="#5e6d8c"/><rect x="6.7" y="0.2" width="1.7" height="1.7" fill="#5e6d8c"/><rect x="0.2" y="6.7" width="1.7" height="1.7" fill="#5e6d8c"/><rect x="5.4" y="5.4" width="4.4" height="4.4" fill="#fff"/><path d="M6.2 6 L6.2 9 L7.2 8.3 L8 9.4 L8.6 9 L7.9 8 L9 7.8Z" fill="#fff" stroke="#8696b8" stroke-width="0.5"/></svg>
<svg style="left:0;top:0" width="1024" height="516" viewBox="0 0 1024 516"><path d="M580.4 412V516" stroke="#e9eaec" stroke-width="1"/><path d="M645.6 412V516" stroke="#e9eaec" stroke-width="1"/><path d="M710.8 412V516" stroke="#e9eaec" stroke-width="1"/><path d="M776 412V516" stroke="#e9eaec" stroke-width="1"/><path d="M841.2 412V516" stroke="#e9eaec" stroke-width="1"/><path d="M906.4 412V516" stroke="#e9eaec" stroke-width="1"/><path d="M971.8 412V516" stroke="#e9eaec" stroke-width="1"/><path d="M564.3 446.9H1021" stroke="#ececee" stroke-width="1"/><path d="M564.3 481.9H1021" stroke="#ececee" stroke-width="1"/><path d="M564.3 412V516" stroke="#c9c9c9" stroke-width="1.4"/><polyline fill="none" stroke="#a7b9ec" stroke-width="1.25" stroke-linejoin="round" points="564.3,501.7 567.2,424.0 569.8,490.8 572.6,516.0 573.5,525.6 576.1,525.6 577.8,505.6 579.5,525.6 633.8,525.6 637.5,466.3 639.9,525.6 650.8,525.6 653.8,499.5 656.0,504.3 659.4,412.7 662.0,490.8 664.9,454.6 667.5,525.6 684.6,525.6 686.6,511.0 688.1,525.6 698.5,525.6 700.5,507.8 702.4,525.6 713.0,525.6 716.3,477.8 719.1,516.9 721.1,412.3 722.4,412.3 724.5,511.5 727.1,413.8 730.0,412.3 733.0,482.2 735.8,433.3 739.1,525.6 746.0,525.6 749.5,495.2 751.7,413.8 754.3,467.0 757.1,480.4 760.1,480.0 763.0,463.7 765.3,525.6 766.9,525.6 768.0,509.3 769.3,525.6 785.1,525.6 787.3,443.1 789.7,446.3 795.5,499.5 798.1,460.4 800.1,525.6 803.8,525.6 811.2,412.3 816.2,412.3 817.2,413.8 819.4,412.3 822.7,475.6 825.3,412.3 828.1,438.7 830.3,412.3 833.5,412.3 836.8,525.6 853.7,525.6 855.4,513.6 856.8,525.6 857.4,525.6 865.4,412.3 868.7,417.0 870.9,412.7 873.5,414.9 876.3,412.3 880.0,412.3 882.4,462.6 884.5,412.3 887.8,412.3 891.0,436.6 895.2,525.6 896.5,525.6 898.6,480.0 901.3,525.6 904.1,525.6 906.7,502.8 909.7,525.6 910.4,525.6 912.1,497.8 914.5,525.6 916.4,525.6 918.2,490.8 920.8,458.3 923.4,449.6 926.2,412.3 937.1,412.3 941.8,525.6 945.5,525.6 947.5,452.8 949.9,525.6 961.6,525.6 964.2,507.8 966.8,525.6 967.3,516.9 969.2,476.7 971.8,497.4 975.1,462.6 979.2,525.6 979.8,516.9 983.1,454.4 987.0,495.2 992.4,449.6 996.3,412.3 998.9,507.1 1001.8,456.1 1005.0,525.6"/><polyline fill="none" stroke="#8f8f8f" stroke-width="1.3" stroke-linejoin="round" points="564.3,466.3 590.4,516.0 600.0,540.0 680.0,540.0 692.9,516.0 714.1,468.0 764.0,516.0 770.0,540.0 780.0,540.0 786.8,516.0 844.4,412.3 891.5,516.0 900.0,540.0 930.0,540.0 938.2,516.0 975.0,460.9 1020.0,436.0"/></svg>
<div style="position:absolute;top:401px;height:20px;line-height:20px;font-size:5.7px;color:#a9a9a9;white-space:nowrap;transform:translateY(0.80px) rotate(0.03deg);transform-origin:right center;right:463.50px;">95.4</div>
<div style="position:absolute;top:437px;height:20px;line-height:20px;font-size:5.7px;color:#a9a9a9;white-space:nowrap;transform:translateY(0.00px) rotate(0.03deg);transform-origin:right center;right:463.50px;">95.35</div>
<div style="position:absolute;top:471px;height:20px;line-height:20px;font-size:5.7px;color:#a9a9a9;white-space:nowrap;transform:translateY(0.90px) rotate(0.03deg);transform-origin:right center;right:463.50px;">95.3</div>
<div style="position:absolute;top:507px;height:20px;line-height:20px;font-size:5.7px;color:#a9a9a9;white-space:nowrap;transform:translateY(0.00px) rotate(0.03deg);transform-origin:right center;right:463.50px;">95.25</div>
</div></body></html>
